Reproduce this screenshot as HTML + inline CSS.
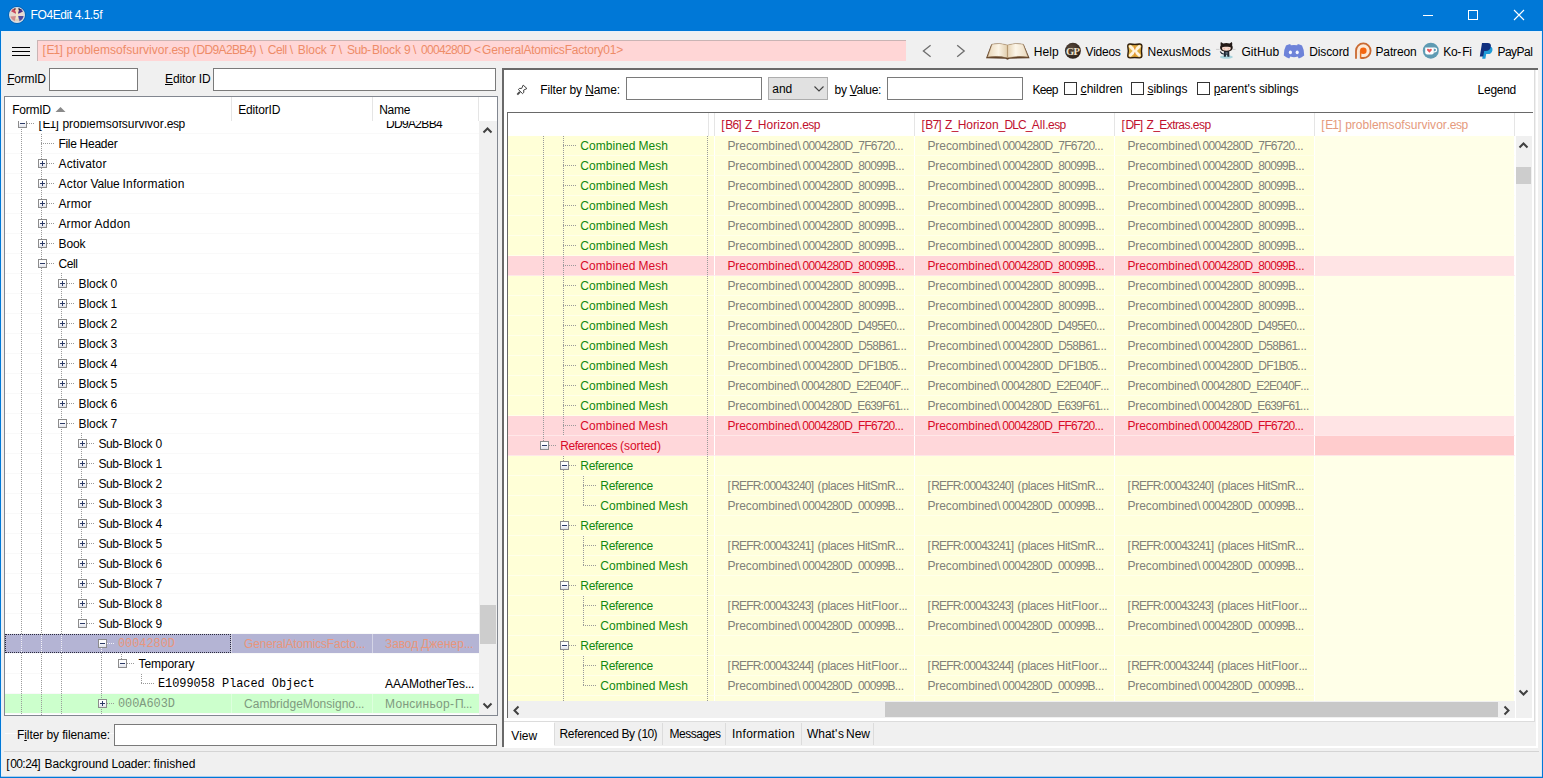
<!DOCTYPE html><html><head><meta charset="utf-8"><title>FO4Edit 4.1.5f</title><style>
*{margin:0;padding:0;box-sizing:border-box}
html,body{width:1543px;height:778px;overflow:hidden;background:#f0f0f0}
body{position:relative;font-family:"Liberation Sans",sans-serif;font-size:12px;color:#000}
div,svg,span{position:absolute}
span.u{position:static;text-decoration:underline}
span.r{position:static}
.t{white-space:nowrap;height:20px}
.m{font-family:"Liberation Mono",monospace}
.inp{background:#fff;border:1px solid #7a7a7a}
.vd{width:1px;background-image:linear-gradient(to bottom,#9a9a9a 50%,transparent 50%);background-size:1px 2px}
.hd{height:1px;background-image:linear-gradient(to right,#9a9a9a 50%,transparent 50%);background-size:2px 1px}
.vd.w{background-image:linear-gradient(to bottom,#f4f4fa 50%,#b4b4d4 50%)}
.hd.w{background-image:linear-gradient(to right,#f4f4fa 50%,#b4b4d4 50%)}
.bx{width:9px;height:9px;border:1px solid #8c8c8c;background:linear-gradient(180deg,#fff 0%,#fbfbfd 45%,#dfe1ea 100%)}
.bx:before{content:"";position:absolute;left:1px;top:3px;width:5px;height:1px;background:#2b3a66}
.bx.p:after{content:"";position:absolute;left:3px;top:1px;width:1px;height:5px;background:#2b3a66}
.cb{width:13px;height:13px;border:1px solid #333;background:#fff}
</style></head><body>
<div style="left:0px;top:0px;width:1543px;height:31px;background:#0078d7;"></div>
<div style="left:0px;top:31px;width:1px;height:747px;background:#0078d7;"></div>
<div style="left:1542px;top:31px;width:1px;height:747px;background:#0078d7;"></div>
<div style="left:1541px;top:31px;width:1px;height:745px;background:#dbe9f7;"></div>
<div style="left:1px;top:31px;width:1px;height:745px;background:#e6f0fa;"></div>
<div style="left:1px;top:31px;width:1541px;height:1px;background:#e6f1fb;"></div>
<div style="left:0px;top:777px;width:1543px;height:1px;background:#0078d7;"></div>
<div style="left:1px;top:776px;width:1541px;height:1px;background:#a8cdee;"></div>
<svg style="left:7px;top:5px" width="20" height="20" viewBox="0 0 20 20">
<circle cx="10" cy="10" r="8.4" fill="none" stroke="#0a4a8c" stroke-width="1" opacity=".55"/>
<circle cx="10" cy="10" r="7.4" fill="#e8d9cf" stroke="#d6dbe0" stroke-width="1.2"/>
<path d="M4 6.2 A7 7 0 0 1 8.6 3.2 L9.2 9 Z" fill="#c94a5c"/>
<path d="M6.2 4 L8.4 3.3 L8.6 5 Z" fill="#3a2a20"/>
<path d="M11.4 3.2 A7 7 0 0 1 16 6.4 L10.8 9 Z" fill="#4a2f86"/>
<path d="M11.6 3.3 L14 4.2 L11.8 5.2 Z" fill="#2e241c"/>
<path d="M3.4 11.4 A7 7 0 0 0 7.6 16.2 L9 11 Z" fill="#cf7f80" opacity=".85"/>
<path d="M16.6 11 A7 7 0 0 1 12.4 16.2 L11 11 Z" fill="#3d3a9a" opacity=".9"/>
<rect x="8.9" y="5" width="2.3" height="10" rx="1" fill="#f3e6c8"/>
<circle cx="10" cy="5.6" r="1.8" fill="#f0dcc0"/>
<path d="M8 15 h4.4" stroke="#d9ccb0" stroke-width="1.2"/>
</svg>
<div class="t" style="left:30.60px;top:5.30px;line-height:20px;font-size:12.0px;color:#fff;"><span class="r" style="letter-spacing:-0.43px">FO4Edit</span><span class="r" style="letter-spacing:-0.33px"> </span><span class="r" style="letter-spacing:-0.67px">4</span><span class="r" style="letter-spacing:-0.33px">.</span><span class="r" style="letter-spacing:-0.67px">1</span><span class="r" style="letter-spacing:-0.33px">.</span><span class="r" style="letter-spacing:-0.00px">5f</span></div>
<svg style="left:1415px;top:0" width="120" height="31" viewBox="0 0 120 31" fill="none" stroke="#fff" stroke-width="1" shape-rendering="crispEdges">
<path d="M8 15.5 H18"/>
<rect x="53.5" y="10.5" width="9" height="9"/>
</svg>
<svg style="left:1508px;top:4px" width="22" height="22" viewBox="0 0 22 22" fill="none" stroke="#fff" stroke-width="1.1">
<path d="M6 6 L16 16 M16 6 L6 16"/>
</svg>
<div style="left:12px;top:47px;width:18px;height:1px;background:#000;"></div>
<div style="left:12px;top:51px;width:18px;height:1px;background:#000;"></div>
<div style="left:12px;top:55px;width:18px;height:1px;background:#000;"></div>
<div style="left:37px;top:40px;width:869px;height:21px;background:#ffd6d6;border-top:1px solid #c9b4b4;border-left:1px solid #c9b4b4;"></div>
<div class="t" style="left:42.40px;top:40.00px;line-height:20px;font-size:12.0px;color:#ee8c68;"><span class="r" style="letter-spacing:0.67px">[</span><span class="r" style="letter-spacing:-0.85px">E1</span><span class="r" style="letter-spacing:0.67px">]</span><span class="r" style="letter-spacing:-0.33px"> </span><span class="r" style="letter-spacing:0.04px">problemsofsurvivor</span><span class="r" style="letter-spacing:-0.33px">.</span><span class="r" style="letter-spacing:-0.44px">esp</span><span class="r" style="letter-spacing:-0.33px"> </span><span class="r" style="letter-spacing:0.01px">(</span><span class="r" style="letter-spacing:-0.67px">DD9A2BB4</span><span class="r" style="letter-spacing:0.01px">)</span><span class="r" style="letter-spacing:-0.33px"> </span><span class="r" style="letter-spacing:1.67px">\</span><span class="r" style="letter-spacing:-0.33px"> </span><span class="r" style="letter-spacing:-0.41px">Cell</span><span class="r" style="letter-spacing:-0.33px"> </span><span class="r" style="letter-spacing:1.67px">\</span><span class="r" style="letter-spacing:-0.33px"> </span><span class="r" style="letter-spacing:-0.06px">Block</span><span class="r" style="letter-spacing:-0.33px"> </span><span class="r" style="letter-spacing:-0.67px">7</span><span class="r" style="letter-spacing:-0.33px"> </span><span class="r" style="letter-spacing:1.67px">\</span><span class="r" style="letter-spacing:-0.33px"> </span><span class="r" style="letter-spacing:-0.45px">Sub</span><span class="r" style="letter-spacing:1.01px">-</span><span class="r" style="letter-spacing:-0.06px">Block</span><span class="r" style="letter-spacing:-0.33px"> </span><span class="r" style="letter-spacing:-0.67px">9</span><span class="r" style="letter-spacing:-0.33px"> </span><span class="r" style="letter-spacing:1.67px">\</span><span class="r" style="letter-spacing:-0.33px"> </span><span class="r" style="letter-spacing:-0.67px">0004280D</span><span class="r" style="letter-spacing:-0.33px"> </span><span class="r" style="letter-spacing:1.00px">&lt;</span><span class="r" style="letter-spacing:-0.20px">GeneralAtomicsFactory01</span><span class="r" style="letter-spacing:1.00px">&gt;</span></div>
<svg style="left:918px;top:42px" width="52" height="18" viewBox="0 0 52 18" fill="none" stroke="#6e6e6e" stroke-width="1.3">
<path d="M12.6 3.3 L5.4 9 L12.6 14.7"/><path d="M39.2 3.3 L46.2 9 L39.2 14.7"/></svg>

<!-- book -->
<svg style="left:985px;top:42.4px" width="46" height="18.4" viewBox="0 0 46 20" preserveAspectRatio="none">
<defs>
<linearGradient id="pgL" x1="0" y1="0" x2="1" y2="0"><stop offset="0" stop-color="#e9d6b8"/><stop offset=".55" stop-color="#fbf4e6"/><stop offset="1" stop-color="#e2cfae"/></linearGradient>
<linearGradient id="pgR" x1="0" y1="0" x2="1" y2="0"><stop offset="0" stop-color="#e6d3b3"/><stop offset=".4" stop-color="#fcf6ea"/><stop offset="1" stop-color="#ead9bd"/></linearGradient>
</defs>
<path d="M1 17.6 L6.2 2.6 Q14 0.6 22.5 3.4 Q31 0.6 38.8 2.6 L44.6 17.6 L24.5 18.2 L22.5 19.2 L20.5 18.2 Z" fill="#5f4127"/>
<path d="M2.6 16.3 L7 2.4 Q14.5 0.4 22.4 3.2 L22.4 17.2 Q13 14.6 2.6 16.3 Z" fill="url(#pgL)" stroke="#9c7d58" stroke-width=".5"/>
<path d="M43 16.3 L38.2 2.4 Q30.5 0.4 22.6 3.2 L22.6 17.2 Q32 14.6 43 16.3 Z" fill="url(#pgR)" stroke="#9c7d58" stroke-width=".5"/>
<path d="M22.5 3.3 V17.4" stroke="#b79a72" stroke-width=".8"/>
</svg>
<!-- GP -->
<svg style="left:1064px;top:42px" width="18" height="18" viewBox="0 0 18 18">
<defs><radialGradient id="gp" cx=".4" cy=".35" r=".8"><stop offset="0" stop-color="#5a4a3c"/><stop offset="1" stop-color="#231a14"/></radialGradient></defs>
<circle cx="8.9" cy="8.8" r="8" fill="url(#gp)"/>
<text x="8.6" y="12.5" text-anchor="middle" font-family="Liberation Serif, serif" font-weight="bold" font-size="10.5" fill="#f0e6d0" letter-spacing="-0.7">GP</text>
</svg>
<!-- nexus -->
<svg style="left:1126px;top:42px" width="18" height="18" viewBox="0 0 18 18">
<defs><linearGradient id="nx" x1="0" y1="0" x2="1" y2="1"><stop offset="0" stop-color="#e9c25a"/><stop offset="1" stop-color="#d6a030"/></linearGradient></defs>
<path d="M4.2 2 Q8.8 3 13.4 2 Q16 1.8 15.9 4.4 Q15 8.9 15.9 13.4 Q16 16 13.4 15.9 Q8.8 15 4.2 15.9 Q1.6 16 1.8 13.4 Q2.8 8.9 1.8 4.4 Q1.6 1.8 4.2 2 Z" fill="url(#nx)" stroke="#2e1c0c" stroke-width="1.4"/>
<path d="M4.4 4.6 L13.2 13.2 M13.2 4.6 L4.4 13.2" stroke="#fff3df" stroke-width="3" stroke-linecap="round"/>
<path d="M8.8 3.4 V7.4 M8.8 10.4 V14.4" stroke="#e8922e" stroke-width="1.3"/>
</svg>
<!-- github octocat -->
<svg style="left:1215px;top:41px" width="23" height="19" viewBox="0 0 23 19">
<ellipse cx="11.4" cy="16" rx="6.4" ry="1.8" fill="#a9d5de"/>
<path d="M1 8.4 H4.6 M18 8.4 H20.5" stroke="#b4b4b4" stroke-width=".6"/>
<path d="M9 9.6 H14.2 L14.4 15.8 H12.4 L12.1 13.8 H11.1 L10.8 15.8 H8.8 Z" fill="#1f2a36"/>
<path d="M10.6 11 H12.6 V13.4 H10.6 Z" fill="#5d6b78"/>
<path d="M9 13 Q6.4 13.2 5.2 10.6" stroke="#1f2a36" stroke-width="1.1" fill="none"/>
<path d="M5.9 1 L8.2 2.5 Q11.4 1.7 14.6 2.5 L16.9 1 Q17.6 3 17.1 4.3 Q18.2 6 17.5 8 Q16 10.6 11.4 10.6 Q6.8 10.6 5.3 8 Q4.6 6 5.7 4.3 Q5.2 3 5.9 1 Z" fill="#231a17"/>
<path d="M7 6.6 Q6.6 9.8 11.4 9.8 Q16.2 9.8 15.8 6.6 Q14.6 5.4 11.4 5.8 Q8.2 5.4 7 6.6 Z" fill="#f6d9cd"/>
<ellipse cx="9.3" cy="7.7" rx=".9" ry=".7" fill="#e9b8a6"/><ellipse cx="13.5" cy="7.7" rx=".9" ry=".7" fill="#e9b8a6"/>
</svg>
<!-- discord -->
<svg style="left:1283px;top:43px" width="22" height="17" viewBox="0 0 22 17">
<path d="M7.2 1 Q4.6 1.5 3 2.6 Q0.6 7 0.8 12.6 Q3.2 14.8 6.2 15.6 L7.4 13.6 Q9.2 14.2 11 14.2 Q12.8 14.2 14.6 13.6 L15.8 15.6 Q18.8 14.8 21.2 12.6 Q21.4 7 19 2.6 Q17.4 1.5 14.8 1 L14.2 2.3 Q11 1.8 7.8 2.3 Z" fill="#6e83d9"/>
<ellipse cx="7.4" cy="9.4" rx="1.6" ry="1.8" fill="#f4f6ff"/><ellipse cx="14.2" cy="9.4" rx="1.6" ry="1.8" fill="#f4f6ff"/>
</svg>
<!-- patreon -->
<svg style="left:1354px;top:42px" width="18" height="18" viewBox="0 0 18 18">
<path d="M2 16.7 V8.7 A7.3 7.3 0 1 1 9.3 16 H6.4 V8.7" fill="#fde9d6" stroke="none"/>
<path d="M2 16.7 V8.7 A7.3 7.3 0 1 1 9.3 16 H7" fill="none" stroke="#c96a32" stroke-width="1.8"/>
<circle cx="9.3" cy="8.7" r="3.3" fill="#f4650f"/>
<path d="M6.6 8.7 V16.7" stroke="#e8701e" stroke-width="1.5"/>
</svg>
<!-- ko-fi -->
<svg style="left:1422px;top:42px" width="18" height="18" viewBox="0 0 18 18">
<circle cx="8.8" cy="8.7" r="8" fill="#5f9bb3"/>
<path d="M3.2 5.4 H11.8 V10.4 Q11.8 12.4 9.8 12.4 H5.2 Q3.2 12.4 3.2 10.4 Z" fill="#fff"/>
<path d="M11.6 6.2 H12.8 Q14.6 6.2 14.6 8 Q14.6 9.8 12.8 9.8 H11.6" fill="none" stroke="#fff" stroke-width="1.3"/>
<path d="M7.4 10.8 L5.2 8.6 Q4.4 7.4 5.6 6.8 Q6.6 6.5 7.4 7.5 Q8.2 6.5 9.2 6.8 Q10.4 7.4 9.6 8.6 Z" fill="#e8555a"/>
</svg>
<!-- paypal -->
<svg style="left:1479px;top:42px" width="15" height="18" viewBox="0 0 15 18">
<path d="M5.2 4.6 H10.4 Q14 4.8 13.4 8.4 Q12.6 12 8.8 12 H7.2 L6.4 16.8 H3.2 Z" fill="#1e9bd7"/>
<path d="M3 1 H8.6 Q12.6 1.2 11.8 5 Q10.8 9 6.8 9 H5.2 L4.2 14.4 H0.8 Z" fill="#10307f"/>
</svg>

<div class="t" style="left:1033.70px;top:42.40px;line-height:20px;font-size:12.0px;"><span class="r" style="letter-spacing:0.08px">Help</span></div>
<div class="t" style="left:1085.60px;top:42.40px;line-height:20px;font-size:12.0px;"><span class="r" style="letter-spacing:-0.25px">Videos</span></div>
<div class="t" style="left:1147.60px;top:42.40px;line-height:20px;font-size:12.0px;"><span class="r" style="letter-spacing:-0.04px">NexusMods</span></div>
<div class="t" style="left:1241.40px;top:42.40px;line-height:20px;font-size:12.0px;"><span class="r" style="letter-spacing:0.11px">GitHub</span></div>
<div class="t" style="left:1309.20px;top:42.40px;line-height:20px;font-size:12.0px;"><span class="r" style="letter-spacing:-0.10px">Discord</span></div>
<div class="t" style="left:1375.50px;top:42.40px;line-height:20px;font-size:12.0px;"><span class="r" style="letter-spacing:-0.15px">Patreon</span></div>
<div class="t" style="left:1443.30px;top:42.40px;line-height:20px;font-size:12.0px;"><span class="r" style="letter-spacing:-0.34px">Ko</span><span class="r" style="letter-spacing:1.00px">-</span><span class="r" style="letter-spacing:-0.50px">Fi</span></div>
<div class="t" style="left:1497.40px;top:42.40px;line-height:20px;font-size:12.0px;"><span class="r" style="letter-spacing:-0.50px">PayPal</span></div>
<div class="t" style="left:7.20px;top:68.00px;line-height:22px;font-size:12.0px;letter-spacing:-0.249px;"><span class="u">F</span>ormID</div>
<div class="inp" style="left:49px;top:68px;width:89px;height:23px;"></div>
<div class="t" style="left:165.00px;top:68.00px;line-height:22px;font-size:12.0px;letter-spacing:-0.131px;"><span class="u">E</span>ditor ID</div>
<div class="inp" style="left:213px;top:68px;width:283px;height:23px;"></div>
<div style="left:4px;top:96px;width:494px;height:620px;background:#fff;border:1px solid #828790;"></div>
<div style="left:5px;top:634px;width:226px;height:19px;background:#b4b4d4;border:1px dotted #2a2a3c;"></div>
<div style="left:231px;top:634px;width:1px;height:19px;background:#d4d4e6;"></div>
<div style="left:232px;top:634px;width:140px;height:19px;background:#b4b4d4;"></div>
<div style="left:372px;top:634px;width:1px;height:19px;background:#d4d4e6;"></div>
<div style="left:373px;top:634px;width:106px;height:19px;background:#b4b4d4;"></div>
<div style="left:5px;top:694px;width:474px;height:19px;background:#ccffcc;"></div>
<div style="left:231px;top:694px;width:1px;height:19px;background:#ddffdd;"></div>
<div style="left:372px;top:694px;width:1px;height:19px;background:#ddffdd;"></div>
<div style="left:5px;top:133px;width:474px;height:1px;background:#f9f9f9;"></div>
<div style="left:5px;top:153px;width:474px;height:1px;background:#f9f9f9;"></div>
<div style="left:5px;top:173px;width:474px;height:1px;background:#f9f9f9;"></div>
<div style="left:5px;top:193px;width:474px;height:1px;background:#f9f9f9;"></div>
<div style="left:5px;top:213px;width:474px;height:1px;background:#f9f9f9;"></div>
<div style="left:5px;top:233px;width:474px;height:1px;background:#f9f9f9;"></div>
<div style="left:5px;top:253px;width:474px;height:1px;background:#f9f9f9;"></div>
<div style="left:5px;top:273px;width:474px;height:1px;background:#f9f9f9;"></div>
<div style="left:5px;top:293px;width:474px;height:1px;background:#f9f9f9;"></div>
<div style="left:5px;top:313px;width:474px;height:1px;background:#f9f9f9;"></div>
<div style="left:5px;top:333px;width:474px;height:1px;background:#f9f9f9;"></div>
<div style="left:5px;top:353px;width:474px;height:1px;background:#f9f9f9;"></div>
<div style="left:5px;top:373px;width:474px;height:1px;background:#f9f9f9;"></div>
<div style="left:5px;top:393px;width:474px;height:1px;background:#f9f9f9;"></div>
<div style="left:5px;top:413px;width:474px;height:1px;background:#f9f9f9;"></div>
<div style="left:5px;top:433px;width:474px;height:1px;background:#f9f9f9;"></div>
<div style="left:5px;top:453px;width:474px;height:1px;background:#f9f9f9;"></div>
<div style="left:5px;top:473px;width:474px;height:1px;background:#f9f9f9;"></div>
<div style="left:5px;top:493px;width:474px;height:1px;background:#f9f9f9;"></div>
<div style="left:5px;top:513px;width:474px;height:1px;background:#f9f9f9;"></div>
<div style="left:5px;top:533px;width:474px;height:1px;background:#f9f9f9;"></div>
<div style="left:5px;top:553px;width:474px;height:1px;background:#f9f9f9;"></div>
<div style="left:5px;top:573px;width:474px;height:1px;background:#f9f9f9;"></div>
<div style="left:5px;top:593px;width:474px;height:1px;background:#f9f9f9;"></div>
<div style="left:5px;top:613px;width:474px;height:1px;background:#f9f9f9;"></div>
<div style="left:5px;top:633px;width:474px;height:1px;background:#f9f9f9;"></div>
<div style="left:5px;top:653px;width:474px;height:1px;background:#f9f9f9;"></div>
<div style="left:5px;top:673px;width:474px;height:1px;background:#f9f9f9;"></div>
<div style="left:5px;top:693px;width:474px;height:1px;background:#f9f9f9;"></div>
<div style="left:5px;top:713px;width:474px;height:1px;background:#f9f9f9;"></div>
<div style="left:5px;top:733px;width:474px;height:1px;background:#f9f9f9;"></div>
<div class="vd" style="left:21px;top:121px;height:594px"></div>
<div class="vd" style="left:41px;top:134px;height:581px"></div>
<div class="vd" style="left:61px;top:273px;height:442px"></div>
<div class="vd" style="left:81px;top:433px;height:190px"></div>
<div class="vd" style="left:101px;top:653px;height:62px"></div>
<div class="vd" style="left:121px;top:654px;height:9px"></div>
<div class="vd" style="left:141px;top:674px;height:10px"></div>
<div class="hd" style="left:27px;top:123px;width:7px"></div>
<div class="bx" style="left:18px;top:119px"></div>
<div class="t" style="left:38.50px;top:114.00px;line-height:20px;font-size:12.0px;"><span class="r" style="letter-spacing:0.63px">[</span><span class="r" style="letter-spacing:-0.85px">E1</span><span class="r" style="letter-spacing:0.63px">]</span><span class="r" style="letter-spacing:-0.37px"> </span><span class="r" style="letter-spacing:-0.00px">problemsofsurvivor</span><span class="r" style="letter-spacing:-0.37px">.</span><span class="r" style="letter-spacing:-0.49px">esp</span></div>
<div class="hd" style="left:41px;top:143px;width:13px"></div>
<div class="t" style="left:58.50px;top:134.00px;line-height:20px;font-size:12.0px;"><span class="r" style="letter-spacing:-0.33px">File</span><span class="r" style="letter-spacing:-0.33px"> </span><span class="r" style="letter-spacing:-0.23px">Header</span></div>
<div class="hd" style="left:47px;top:163px;width:7px"></div>
<div class="bx p" style="left:38px;top:159px"></div>
<div class="t" style="left:58.50px;top:154.00px;line-height:20px;font-size:12.0px;"><span class="r" style="letter-spacing:0.15px">Activator</span></div>
<div class="hd" style="left:47px;top:183px;width:7px"></div>
<div class="bx p" style="left:38px;top:179px"></div>
<div class="t" style="left:58.50px;top:174.00px;line-height:20px;font-size:12.0px;"><span class="r" style="letter-spacing:0.20px">Actor</span><span class="r" style="letter-spacing:-0.33px"> </span><span class="r" style="letter-spacing:-0.16px">Value</span><span class="r" style="letter-spacing:-0.33px"> </span><span class="r" style="letter-spacing:0.18px">Information</span></div>
<div class="hd" style="left:47px;top:203px;width:7px"></div>
<div class="bx p" style="left:38px;top:199px"></div>
<div class="t" style="left:58.50px;top:194.00px;line-height:20px;font-size:12.0px;"><span class="r" style="letter-spacing:0.07px">Armor</span></div>
<div class="hd" style="left:47px;top:223px;width:7px"></div>
<div class="bx p" style="left:38px;top:219px"></div>
<div class="t" style="left:58.50px;top:214.00px;line-height:20px;font-size:12.0px;"><span class="r" style="letter-spacing:0.07px">Armor</span><span class="r" style="letter-spacing:-0.33px"> </span><span class="r" style="letter-spacing:0.26px">Addon</span></div>
<div class="hd" style="left:47px;top:243px;width:7px"></div>
<div class="bx p" style="left:38px;top:239px"></div>
<div class="t" style="left:58.50px;top:234.00px;line-height:20px;font-size:12.0px;"><span class="r" style="letter-spacing:-0.09px">Book</span></div>
<div class="hd" style="left:47px;top:263px;width:7px"></div>
<div class="bx" style="left:38px;top:259px"></div>
<div class="t" style="left:58.50px;top:254.00px;line-height:20px;font-size:12.0px;"><span class="r" style="letter-spacing:-0.42px">Cell</span></div>
<div class="hd" style="left:67px;top:283px;width:7px"></div>
<div class="bx p" style="left:58px;top:279px"></div>
<div class="t" style="left:78.50px;top:274.00px;line-height:20px;font-size:12.0px;"><span class="r" style="letter-spacing:-0.07px">Block</span><span class="r" style="letter-spacing:-0.33px"> </span><span class="r" style="letter-spacing:-0.67px">0</span></div>
<div class="hd" style="left:67px;top:303px;width:7px"></div>
<div class="bx p" style="left:58px;top:299px"></div>
<div class="t" style="left:78.50px;top:294.00px;line-height:20px;font-size:12.0px;"><span class="r" style="letter-spacing:-0.07px">Block</span><span class="r" style="letter-spacing:-0.33px"> </span><span class="r" style="letter-spacing:-0.67px">1</span></div>
<div class="hd" style="left:67px;top:323px;width:7px"></div>
<div class="bx p" style="left:58px;top:319px"></div>
<div class="t" style="left:78.50px;top:314.00px;line-height:20px;font-size:12.0px;"><span class="r" style="letter-spacing:-0.07px">Block</span><span class="r" style="letter-spacing:-0.33px"> </span><span class="r" style="letter-spacing:-0.67px">2</span></div>
<div class="hd" style="left:67px;top:343px;width:7px"></div>
<div class="bx p" style="left:58px;top:339px"></div>
<div class="t" style="left:78.50px;top:334.00px;line-height:20px;font-size:12.0px;"><span class="r" style="letter-spacing:-0.07px">Block</span><span class="r" style="letter-spacing:-0.33px"> </span><span class="r" style="letter-spacing:-0.67px">3</span></div>
<div class="hd" style="left:67px;top:363px;width:7px"></div>
<div class="bx p" style="left:58px;top:359px"></div>
<div class="t" style="left:78.50px;top:354.00px;line-height:20px;font-size:12.0px;"><span class="r" style="letter-spacing:-0.07px">Block</span><span class="r" style="letter-spacing:-0.33px"> </span><span class="r" style="letter-spacing:-0.67px">4</span></div>
<div class="hd" style="left:67px;top:383px;width:7px"></div>
<div class="bx p" style="left:58px;top:379px"></div>
<div class="t" style="left:78.50px;top:374.00px;line-height:20px;font-size:12.0px;"><span class="r" style="letter-spacing:-0.07px">Block</span><span class="r" style="letter-spacing:-0.33px"> </span><span class="r" style="letter-spacing:-0.67px">5</span></div>
<div class="hd" style="left:67px;top:403px;width:7px"></div>
<div class="bx p" style="left:58px;top:399px"></div>
<div class="t" style="left:78.50px;top:394.00px;line-height:20px;font-size:12.0px;"><span class="r" style="letter-spacing:-0.07px">Block</span><span class="r" style="letter-spacing:-0.33px"> </span><span class="r" style="letter-spacing:-0.67px">6</span></div>
<div class="hd" style="left:67px;top:423px;width:7px"></div>
<div class="bx" style="left:58px;top:419px"></div>
<div class="t" style="left:78.50px;top:414.00px;line-height:20px;font-size:12.0px;"><span class="r" style="letter-spacing:-0.07px">Block</span><span class="r" style="letter-spacing:-0.33px"> </span><span class="r" style="letter-spacing:-0.67px">7</span></div>
<div class="hd" style="left:87px;top:443px;width:7px"></div>
<div class="bx p" style="left:78px;top:439px"></div>
<div class="t" style="left:98.50px;top:434.00px;line-height:20px;font-size:12.0px;"><span class="r" style="letter-spacing:-0.45px">Sub</span><span class="r" style="letter-spacing:1.00px">-</span><span class="r" style="letter-spacing:-0.07px">Block</span><span class="r" style="letter-spacing:-0.33px"> </span><span class="r" style="letter-spacing:-0.67px">0</span></div>
<div class="hd" style="left:87px;top:463px;width:7px"></div>
<div class="bx p" style="left:78px;top:459px"></div>
<div class="t" style="left:98.50px;top:454.00px;line-height:20px;font-size:12.0px;"><span class="r" style="letter-spacing:-0.45px">Sub</span><span class="r" style="letter-spacing:1.00px">-</span><span class="r" style="letter-spacing:-0.07px">Block</span><span class="r" style="letter-spacing:-0.33px"> </span><span class="r" style="letter-spacing:-0.67px">1</span></div>
<div class="hd" style="left:87px;top:483px;width:7px"></div>
<div class="bx p" style="left:78px;top:479px"></div>
<div class="t" style="left:98.50px;top:474.00px;line-height:20px;font-size:12.0px;"><span class="r" style="letter-spacing:-0.45px">Sub</span><span class="r" style="letter-spacing:1.00px">-</span><span class="r" style="letter-spacing:-0.07px">Block</span><span class="r" style="letter-spacing:-0.33px"> </span><span class="r" style="letter-spacing:-0.67px">2</span></div>
<div class="hd" style="left:87px;top:503px;width:7px"></div>
<div class="bx p" style="left:78px;top:499px"></div>
<div class="t" style="left:98.50px;top:494.00px;line-height:20px;font-size:12.0px;"><span class="r" style="letter-spacing:-0.45px">Sub</span><span class="r" style="letter-spacing:1.00px">-</span><span class="r" style="letter-spacing:-0.07px">Block</span><span class="r" style="letter-spacing:-0.33px"> </span><span class="r" style="letter-spacing:-0.67px">3</span></div>
<div class="hd" style="left:87px;top:523px;width:7px"></div>
<div class="bx p" style="left:78px;top:519px"></div>
<div class="t" style="left:98.50px;top:514.00px;line-height:20px;font-size:12.0px;"><span class="r" style="letter-spacing:-0.45px">Sub</span><span class="r" style="letter-spacing:1.00px">-</span><span class="r" style="letter-spacing:-0.07px">Block</span><span class="r" style="letter-spacing:-0.33px"> </span><span class="r" style="letter-spacing:-0.67px">4</span></div>
<div class="hd" style="left:87px;top:543px;width:7px"></div>
<div class="bx p" style="left:78px;top:539px"></div>
<div class="t" style="left:98.50px;top:534.00px;line-height:20px;font-size:12.0px;"><span class="r" style="letter-spacing:-0.45px">Sub</span><span class="r" style="letter-spacing:1.00px">-</span><span class="r" style="letter-spacing:-0.07px">Block</span><span class="r" style="letter-spacing:-0.33px"> </span><span class="r" style="letter-spacing:-0.67px">5</span></div>
<div class="hd" style="left:87px;top:563px;width:7px"></div>
<div class="bx p" style="left:78px;top:559px"></div>
<div class="t" style="left:98.50px;top:554.00px;line-height:20px;font-size:12.0px;"><span class="r" style="letter-spacing:-0.45px">Sub</span><span class="r" style="letter-spacing:1.00px">-</span><span class="r" style="letter-spacing:-0.07px">Block</span><span class="r" style="letter-spacing:-0.33px"> </span><span class="r" style="letter-spacing:-0.67px">6</span></div>
<div class="hd" style="left:87px;top:583px;width:7px"></div>
<div class="bx p" style="left:78px;top:579px"></div>
<div class="t" style="left:98.50px;top:574.00px;line-height:20px;font-size:12.0px;"><span class="r" style="letter-spacing:-0.45px">Sub</span><span class="r" style="letter-spacing:1.00px">-</span><span class="r" style="letter-spacing:-0.07px">Block</span><span class="r" style="letter-spacing:-0.33px"> </span><span class="r" style="letter-spacing:-0.67px">7</span></div>
<div class="hd" style="left:87px;top:603px;width:7px"></div>
<div class="bx p" style="left:78px;top:599px"></div>
<div class="t" style="left:98.50px;top:594.00px;line-height:20px;font-size:12.0px;"><span class="r" style="letter-spacing:-0.45px">Sub</span><span class="r" style="letter-spacing:1.00px">-</span><span class="r" style="letter-spacing:-0.07px">Block</span><span class="r" style="letter-spacing:-0.33px"> </span><span class="r" style="letter-spacing:-0.67px">8</span></div>
<div class="hd" style="left:87px;top:623px;width:7px"></div>
<div class="bx" style="left:78px;top:619px"></div>
<div class="t" style="left:98.50px;top:614.00px;line-height:20px;font-size:12.0px;"><span class="r" style="letter-spacing:-0.45px">Sub</span><span class="r" style="letter-spacing:1.00px">-</span><span class="r" style="letter-spacing:-0.07px">Block</span><span class="r" style="letter-spacing:-0.33px"> </span><span class="r" style="letter-spacing:-0.67px">9</span></div>
<div class="hd" style="left:107px;top:643px;width:7px"></div>
<div class="bx" style="left:98px;top:639px"></div>
<div class="t m" style="left:118.00px;top:633.80px;line-height:20px;font-size:11.9px;letter-spacing:-0.022px;color:#e8967c;">0004280D</div>
<div class="hd" style="left:127px;top:663px;width:7px"></div>
<div class="bx" style="left:118px;top:659px"></div>
<div class="t" style="left:138.50px;top:654.00px;line-height:20px;font-size:12.0px;"><span class="r" style="letter-spacing:-0.08px">Temporary</span></div>
<div class="hd" style="left:141px;top:683px;width:13px"></div>
<div class="t m" style="left:158.00px;top:673.80px;line-height:20px;font-size:11.9px;letter-spacing:-0.022px;">E1099058 Placed Object</div>
<div class="hd" style="left:107px;top:703px;width:7px"></div>
<div class="bx p" style="left:98px;top:699px"></div>
<div class="t m" style="left:118.00px;top:693.80px;line-height:20px;font-size:11.9px;letter-spacing:-0.022px;color:#7f9a7f;">000A603D</div>
<div class="vd w" style="left:21px;top:635px;height:17px"></div>
<div class="vd w" style="left:41px;top:635px;height:17px"></div>
<div class="vd w" style="left:61px;top:635px;height:17px"></div>
<div class="vd w" style="left:101px;top:648px;height:4px"></div>
<div class="hd w" style="left:107px;top:643px;width:7px"></div>
<div class="t" style="left:386.00px;top:114.00px;line-height:20px;font-size:12.0px;"><span class="r" style="letter-spacing:-0.67px">DD9A2BB4</span></div>
<div class="t" style="left:244.00px;top:634.00px;line-height:20px;font-size:12.0px;color:#e8967c;"><span class="r" style="letter-spacing:-0.18px">GeneralAtomicsFacto</span><span class="r" style="letter-spacing:-0.33px">.</span><span class="r" style="letter-spacing:-0.33px">.</span><span class="r" style="letter-spacing:-0.33px">.</span></div>
<div class="t" style="left:385.00px;top:634.00px;line-height:20px;font-size:12.0px;color:#e8967c;"><span class="r" style="letter-spacing:-0.11px">Завод</span><span class="r" style="letter-spacing:-0.33px"> </span><span class="r" style="letter-spacing:0.03px">Дженер</span><span class="r" style="letter-spacing:-0.33px">.</span><span class="r" style="letter-spacing:-0.33px">.</span><span class="r" style="letter-spacing:-0.33px">.</span></div>
<div class="t" style="left:385.00px;top:674.00px;line-height:20px;font-size:12.0px;"><span class="r" style="letter-spacing:-0.00px">AAAMotherTes</span><span class="r" style="letter-spacing:-0.33px">.</span><span class="r" style="letter-spacing:-0.33px">.</span><span class="r" style="letter-spacing:-0.33px">.</span></div>
<div class="t" style="left:244.00px;top:694.00px;line-height:20px;font-size:12.0px;color:#7f9a7f;"><span class="r" style="letter-spacing:0.02px">CambridgeMonsigno</span><span class="r" style="letter-spacing:-0.33px">.</span><span class="r" style="letter-spacing:-0.33px">.</span><span class="r" style="letter-spacing:-0.33px">.</span></div>
<div class="t" style="left:385.00px;top:694.00px;line-height:20px;font-size:12.0px;color:#7f9a7f;"><span class="r" style="letter-spacing:0.29px">Монсиньор</span><span class="r" style="letter-spacing:1.00px">-</span><span class="r" style="letter-spacing:-0.62px">П</span><span class="r" style="letter-spacing:-0.33px">.</span><span class="r" style="letter-spacing:-0.33px">.</span><span class="r" style="letter-spacing:-0.33px">.</span></div>
<div style="left:5px;top:97px;width:492px;height:24px;background:#fff;"></div>
<div class="t" style="left:12.30px;top:98.50px;line-height:22px;font-size:12.0px;"><span class="r" style="letter-spacing:-0.28px">FormID</span></div>
<div class="t" style="left:238.20px;top:98.50px;line-height:22px;font-size:12.0px;"><span class="r" style="letter-spacing:-0.17px">EditorID</span></div>
<div class="t" style="left:379.20px;top:98.50px;line-height:22px;font-size:12.0px;"><span class="r" style="letter-spacing:-0.25px">Name</span></div>
<svg style="left:55px;top:106px" width="11" height="7" viewBox="0 0 11 7"><path d="M0.5 6 L5.5 1 L10.5 6 Z" fill="#8a8a8a"/></svg>
<div style="left:231px;top:97px;width:1px;height:24px;background:#e5e5e5;"></div>
<div style="left:372px;top:97px;width:1px;height:24px;background:#e5e5e5;"></div>
<div style="left:478px;top:97px;width:1px;height:24px;background:#e5e5e5;"></div>
<div style="left:479px;top:121px;width:18px;height:594px;background:#f0f0f0;"></div>
<div style="left:480px;top:605px;width:16px;height:39px;background:#cdcdcd;"></div>
<svg style="left:482px;top:126px" width="11" height="8" viewBox="0 0 11 8" fill="none" stroke="#404040" stroke-width="2"><path d="M1.5 6.5 L5.5 2.5 L9.5 6.5"/></svg>
<svg style="left:482px;top:702px" width="11" height="8" viewBox="0 0 11 8" fill="none" stroke="#404040" stroke-width="2"><path d="M1.5 1.5 L5.5 5.5 L9.5 1.5"/></svg>
<div class="t" style="left:17.00px;top:724.00px;line-height:22px;font-size:12.0px;letter-spacing:-0.089px;">F<span class="u">i</span>lter by filename:</div>
<div class="inp" style="left:114px;top:724px;width:383px;height:22px;"></div>
<div style="left:502px;top:68px;width:1036px;height:680px;background:#f0f0f0;"></div>
<div style="left:1536px;top:70px;width:2px;height:678px;background:#fff;"></div>
<div style="left:504px;top:746px;width:1034px;height:2px;background:#fff;"></div>
<div style="left:502px;top:68px;width:1036px;height:2px;background:#696969;"></div>
<div style="left:502px;top:68px;width:2px;height:679px;background:#696969;"></div>
<div style="left:504px;top:70px;width:1031px;height:652px;background:#fff;border-right:1px solid #dcdcdc;border-bottom:1px solid #dcdcdc;"></div>

<svg style="left:516px;top:84px" width="12" height="12" viewBox="0 0 12 12" fill="none" stroke="#3c3c3c" stroke-width="1" stroke-linejoin="round">
<path d="M7.2 1.1 L10.9 4.5 L7.6 6.2 L7.9 8.3 L6.5 9.6 L2.4 5.6 L3.4 4.4 L5.7 4.4 Z"/>
<path d="M3.9 7.9 L1.3 10.6" stroke-width="1.9" stroke="#4a4a4a"/>
</svg>

<div class="t" style="left:540.30px;top:79.50px;line-height:20px;font-size:12.0px;letter-spacing:-0.117px;">Filter by <span class="u">N</span>ame:</div>
<div class="inp" style="left:626px;top:77px;width:136px;height:23px;"></div>
<div style="left:768px;top:77px;width:60px;height:23px;background:#e1e1e1;border:1px solid #adadad;"></div>
<div class="t" style="left:772.30px;top:78.50px;line-height:20px;font-size:12.0px;"><span class="r" style="letter-spacing:-0.01px">and</span></div>
<svg style="left:813px;top:85px" width="12" height="8" viewBox="0 0 12 8" fill="none" stroke="#404040" stroke-width="1.1"><path d="M1.5 1.5 L6 6 L10.5 1.5"/></svg>
<div class="t" style="left:834.60px;top:79.50px;line-height:20px;font-size:12.0px;letter-spacing:-0.294px;">by <span class="u">V</span>alue:</div>
<div class="inp" style="left:887px;top:77px;width:136px;height:23px;"></div>
<div class="t" style="left:1032.40px;top:80.00px;line-height:20px;font-size:12.0px;"><span class="r" style="letter-spacing:-0.63px">Keep</span></div>
<div class="cb" style="left:1064px;top:82px;width:13px;height:13px;"></div>
<div class="t" style="left:1080.60px;top:79.00px;line-height:20px;font-size:12.0px;letter-spacing:0.022px;"><span class="u">c</span>hildren</div>
<div class="cb" style="left:1131px;top:82px;width:13px;height:13px;"></div>
<div class="t" style="left:1147.40px;top:79.00px;line-height:20px;font-size:12.0px;letter-spacing:0.010px;"><span class="u">s</span>iblings</div>
<div class="cb" style="left:1197px;top:82px;width:13px;height:13px;"></div>
<div class="t" style="left:1213.70px;top:79.00px;line-height:20px;font-size:12.0px;letter-spacing:-0.051px;"><span class="u">p</span>arent's siblings</div>
<div class="t" style="left:1477.60px;top:80.00px;line-height:20px;font-size:12.0px;"><span class="r" style="letter-spacing:-0.27px">Legend</span></div>
<div style="left:507px;top:112px;width:1026px;height:606px;background:#fff;border-top:1px solid #696969;border-left:1px solid #696969;"></div>
<div style="left:508px;top:136px;width:1007px;height:565px;overflow:hidden">
<div style="left:0px;top:0px;width:206px;height:19px;background:#ffffd7;"></div>
<div style="left:207px;top:0px;width:199px;height:19px;background:#ffffdc;"></div>
<div style="left:407px;top:0px;width:199px;height:19px;background:#ffffdc;"></div>
<div style="left:607px;top:0px;width:199px;height:19px;background:#ffffdc;"></div>
<div style="left:807px;top:0px;width:199px;height:19px;background:#ffffe8;"></div>
<div style="left:0px;top:19px;width:1007px;height:1px;background:#ffffea;"></div>
<div style="left:0px;top:20px;width:206px;height:19px;background:#ffffd7;"></div>
<div style="left:207px;top:20px;width:199px;height:19px;background:#ffffdc;"></div>
<div style="left:407px;top:20px;width:199px;height:19px;background:#ffffdc;"></div>
<div style="left:607px;top:20px;width:199px;height:19px;background:#ffffdc;"></div>
<div style="left:807px;top:20px;width:199px;height:19px;background:#ffffe8;"></div>
<div style="left:0px;top:39px;width:1007px;height:1px;background:#ffffea;"></div>
<div style="left:0px;top:40px;width:206px;height:19px;background:#ffffd7;"></div>
<div style="left:207px;top:40px;width:199px;height:19px;background:#ffffdc;"></div>
<div style="left:407px;top:40px;width:199px;height:19px;background:#ffffdc;"></div>
<div style="left:607px;top:40px;width:199px;height:19px;background:#ffffdc;"></div>
<div style="left:807px;top:40px;width:199px;height:19px;background:#ffffe8;"></div>
<div style="left:0px;top:59px;width:1007px;height:1px;background:#ffffea;"></div>
<div style="left:0px;top:60px;width:206px;height:19px;background:#ffffd7;"></div>
<div style="left:207px;top:60px;width:199px;height:19px;background:#ffffdc;"></div>
<div style="left:407px;top:60px;width:199px;height:19px;background:#ffffdc;"></div>
<div style="left:607px;top:60px;width:199px;height:19px;background:#ffffdc;"></div>
<div style="left:807px;top:60px;width:199px;height:19px;background:#ffffe8;"></div>
<div style="left:0px;top:79px;width:1007px;height:1px;background:#ffffea;"></div>
<div style="left:0px;top:80px;width:206px;height:19px;background:#ffffd7;"></div>
<div style="left:207px;top:80px;width:199px;height:19px;background:#ffffdc;"></div>
<div style="left:407px;top:80px;width:199px;height:19px;background:#ffffdc;"></div>
<div style="left:607px;top:80px;width:199px;height:19px;background:#ffffdc;"></div>
<div style="left:807px;top:80px;width:199px;height:19px;background:#ffffe8;"></div>
<div style="left:0px;top:99px;width:1007px;height:1px;background:#ffffea;"></div>
<div style="left:0px;top:100px;width:206px;height:19px;background:#ffffd7;"></div>
<div style="left:207px;top:100px;width:199px;height:19px;background:#ffffdc;"></div>
<div style="left:407px;top:100px;width:199px;height:19px;background:#ffffdc;"></div>
<div style="left:607px;top:100px;width:199px;height:19px;background:#ffffdc;"></div>
<div style="left:807px;top:100px;width:199px;height:19px;background:#ffffe8;"></div>
<div style="left:0px;top:119px;width:1007px;height:1px;background:#ffffea;"></div>
<div style="left:0px;top:120px;width:206px;height:19px;background:#ffd7da;"></div>
<div style="left:207px;top:120px;width:199px;height:19px;background:#ffd7da;"></div>
<div style="left:407px;top:120px;width:199px;height:19px;background:#ffd7da;"></div>
<div style="left:607px;top:120px;width:199px;height:19px;background:#ffd7da;"></div>
<div style="left:807px;top:120px;width:199px;height:19px;background:#ffe4e5;"></div>
<div style="left:0px;top:139px;width:1007px;height:1px;background:#ffe7e9;"></div>
<div style="left:0px;top:140px;width:206px;height:19px;background:#ffffd7;"></div>
<div style="left:207px;top:140px;width:199px;height:19px;background:#ffffdc;"></div>
<div style="left:407px;top:140px;width:199px;height:19px;background:#ffffdc;"></div>
<div style="left:607px;top:140px;width:199px;height:19px;background:#ffffdc;"></div>
<div style="left:807px;top:140px;width:199px;height:19px;background:#ffffe8;"></div>
<div style="left:0px;top:159px;width:1007px;height:1px;background:#ffffea;"></div>
<div style="left:0px;top:160px;width:206px;height:19px;background:#ffffd7;"></div>
<div style="left:207px;top:160px;width:199px;height:19px;background:#ffffdc;"></div>
<div style="left:407px;top:160px;width:199px;height:19px;background:#ffffdc;"></div>
<div style="left:607px;top:160px;width:199px;height:19px;background:#ffffdc;"></div>
<div style="left:807px;top:160px;width:199px;height:19px;background:#ffffe8;"></div>
<div style="left:0px;top:179px;width:1007px;height:1px;background:#ffffea;"></div>
<div style="left:0px;top:180px;width:206px;height:19px;background:#ffffd7;"></div>
<div style="left:207px;top:180px;width:199px;height:19px;background:#ffffdc;"></div>
<div style="left:407px;top:180px;width:199px;height:19px;background:#ffffdc;"></div>
<div style="left:607px;top:180px;width:199px;height:19px;background:#ffffdc;"></div>
<div style="left:807px;top:180px;width:199px;height:19px;background:#ffffe8;"></div>
<div style="left:0px;top:199px;width:1007px;height:1px;background:#ffffea;"></div>
<div style="left:0px;top:200px;width:206px;height:19px;background:#ffffd7;"></div>
<div style="left:207px;top:200px;width:199px;height:19px;background:#ffffdc;"></div>
<div style="left:407px;top:200px;width:199px;height:19px;background:#ffffdc;"></div>
<div style="left:607px;top:200px;width:199px;height:19px;background:#ffffdc;"></div>
<div style="left:807px;top:200px;width:199px;height:19px;background:#ffffe8;"></div>
<div style="left:0px;top:219px;width:1007px;height:1px;background:#ffffea;"></div>
<div style="left:0px;top:220px;width:206px;height:19px;background:#ffffd7;"></div>
<div style="left:207px;top:220px;width:199px;height:19px;background:#ffffdc;"></div>
<div style="left:407px;top:220px;width:199px;height:19px;background:#ffffdc;"></div>
<div style="left:607px;top:220px;width:199px;height:19px;background:#ffffdc;"></div>
<div style="left:807px;top:220px;width:199px;height:19px;background:#ffffe8;"></div>
<div style="left:0px;top:239px;width:1007px;height:1px;background:#ffffea;"></div>
<div style="left:0px;top:240px;width:206px;height:19px;background:#ffffd7;"></div>
<div style="left:207px;top:240px;width:199px;height:19px;background:#ffffdc;"></div>
<div style="left:407px;top:240px;width:199px;height:19px;background:#ffffdc;"></div>
<div style="left:607px;top:240px;width:199px;height:19px;background:#ffffdc;"></div>
<div style="left:807px;top:240px;width:199px;height:19px;background:#ffffe8;"></div>
<div style="left:0px;top:259px;width:1007px;height:1px;background:#ffffea;"></div>
<div style="left:0px;top:260px;width:206px;height:19px;background:#ffffd7;"></div>
<div style="left:207px;top:260px;width:199px;height:19px;background:#ffffdc;"></div>
<div style="left:407px;top:260px;width:199px;height:19px;background:#ffffdc;"></div>
<div style="left:607px;top:260px;width:199px;height:19px;background:#ffffdc;"></div>
<div style="left:807px;top:260px;width:199px;height:19px;background:#ffffe8;"></div>
<div style="left:0px;top:279px;width:1007px;height:1px;background:#ffffea;"></div>
<div style="left:0px;top:280px;width:206px;height:19px;background:#ffd7da;"></div>
<div style="left:207px;top:280px;width:199px;height:19px;background:#ffd7da;"></div>
<div style="left:407px;top:280px;width:199px;height:19px;background:#ffd7da;"></div>
<div style="left:607px;top:280px;width:199px;height:19px;background:#ffd7da;"></div>
<div style="left:807px;top:280px;width:199px;height:19px;background:#ffe4e5;"></div>
<div style="left:0px;top:299px;width:1007px;height:1px;background:#ffe7e9;"></div>
<div style="left:0px;top:300px;width:206px;height:19px;background:#ffd7da;"></div>
<div style="left:207px;top:300px;width:199px;height:19px;background:#ffd7da;"></div>
<div style="left:407px;top:300px;width:199px;height:19px;background:#ffd7da;"></div>
<div style="left:607px;top:300px;width:199px;height:19px;background:#ffd7da;"></div>
<div style="left:807px;top:300px;width:199px;height:19px;background:#ffcccd;"></div>
<div style="left:0px;top:319px;width:1007px;height:1px;background:#ffe7e9;"></div>
<div style="left:0px;top:320px;width:206px;height:19px;background:#ffffd7;"></div>
<div style="left:207px;top:320px;width:199px;height:19px;background:#ffffdc;"></div>
<div style="left:407px;top:320px;width:199px;height:19px;background:#ffffdc;"></div>
<div style="left:607px;top:320px;width:199px;height:19px;background:#ffffdc;"></div>
<div style="left:807px;top:320px;width:199px;height:19px;background:#ffffe8;"></div>
<div style="left:0px;top:339px;width:1007px;height:1px;background:#ffffea;"></div>
<div style="left:0px;top:340px;width:206px;height:19px;background:#ffffd7;"></div>
<div style="left:207px;top:340px;width:199px;height:19px;background:#ffffdc;"></div>
<div style="left:407px;top:340px;width:199px;height:19px;background:#ffffdc;"></div>
<div style="left:607px;top:340px;width:199px;height:19px;background:#ffffdc;"></div>
<div style="left:807px;top:340px;width:199px;height:19px;background:#ffffe8;"></div>
<div style="left:0px;top:359px;width:1007px;height:1px;background:#ffffea;"></div>
<div style="left:0px;top:360px;width:206px;height:19px;background:#ffffd7;"></div>
<div style="left:207px;top:360px;width:199px;height:19px;background:#ffffdc;"></div>
<div style="left:407px;top:360px;width:199px;height:19px;background:#ffffdc;"></div>
<div style="left:607px;top:360px;width:199px;height:19px;background:#ffffdc;"></div>
<div style="left:807px;top:360px;width:199px;height:19px;background:#ffffe8;"></div>
<div style="left:0px;top:379px;width:1007px;height:1px;background:#ffffea;"></div>
<div style="left:0px;top:380px;width:206px;height:19px;background:#ffffd7;"></div>
<div style="left:207px;top:380px;width:199px;height:19px;background:#ffffdc;"></div>
<div style="left:407px;top:380px;width:199px;height:19px;background:#ffffdc;"></div>
<div style="left:607px;top:380px;width:199px;height:19px;background:#ffffdc;"></div>
<div style="left:807px;top:380px;width:199px;height:19px;background:#ffffe8;"></div>
<div style="left:0px;top:399px;width:1007px;height:1px;background:#ffffea;"></div>
<div style="left:0px;top:400px;width:206px;height:19px;background:#ffffd7;"></div>
<div style="left:207px;top:400px;width:199px;height:19px;background:#ffffdc;"></div>
<div style="left:407px;top:400px;width:199px;height:19px;background:#ffffdc;"></div>
<div style="left:607px;top:400px;width:199px;height:19px;background:#ffffdc;"></div>
<div style="left:807px;top:400px;width:199px;height:19px;background:#ffffe8;"></div>
<div style="left:0px;top:419px;width:1007px;height:1px;background:#ffffea;"></div>
<div style="left:0px;top:420px;width:206px;height:19px;background:#ffffd7;"></div>
<div style="left:207px;top:420px;width:199px;height:19px;background:#ffffdc;"></div>
<div style="left:407px;top:420px;width:199px;height:19px;background:#ffffdc;"></div>
<div style="left:607px;top:420px;width:199px;height:19px;background:#ffffdc;"></div>
<div style="left:807px;top:420px;width:199px;height:19px;background:#ffffe8;"></div>
<div style="left:0px;top:439px;width:1007px;height:1px;background:#ffffea;"></div>
<div style="left:0px;top:440px;width:206px;height:19px;background:#ffffd7;"></div>
<div style="left:207px;top:440px;width:199px;height:19px;background:#ffffdc;"></div>
<div style="left:407px;top:440px;width:199px;height:19px;background:#ffffdc;"></div>
<div style="left:607px;top:440px;width:199px;height:19px;background:#ffffdc;"></div>
<div style="left:807px;top:440px;width:199px;height:19px;background:#ffffe8;"></div>
<div style="left:0px;top:459px;width:1007px;height:1px;background:#ffffea;"></div>
<div style="left:0px;top:460px;width:206px;height:19px;background:#ffffd7;"></div>
<div style="left:207px;top:460px;width:199px;height:19px;background:#ffffdc;"></div>
<div style="left:407px;top:460px;width:199px;height:19px;background:#ffffdc;"></div>
<div style="left:607px;top:460px;width:199px;height:19px;background:#ffffdc;"></div>
<div style="left:807px;top:460px;width:199px;height:19px;background:#ffffe8;"></div>
<div style="left:0px;top:479px;width:1007px;height:1px;background:#ffffea;"></div>
<div style="left:0px;top:480px;width:206px;height:19px;background:#ffffd7;"></div>
<div style="left:207px;top:480px;width:199px;height:19px;background:#ffffdc;"></div>
<div style="left:407px;top:480px;width:199px;height:19px;background:#ffffdc;"></div>
<div style="left:607px;top:480px;width:199px;height:19px;background:#ffffdc;"></div>
<div style="left:807px;top:480px;width:199px;height:19px;background:#ffffe8;"></div>
<div style="left:0px;top:499px;width:1007px;height:1px;background:#ffffea;"></div>
<div style="left:0px;top:500px;width:206px;height:19px;background:#ffffd7;"></div>
<div style="left:207px;top:500px;width:199px;height:19px;background:#ffffdc;"></div>
<div style="left:407px;top:500px;width:199px;height:19px;background:#ffffdc;"></div>
<div style="left:607px;top:500px;width:199px;height:19px;background:#ffffdc;"></div>
<div style="left:807px;top:500px;width:199px;height:19px;background:#ffffe8;"></div>
<div style="left:0px;top:519px;width:1007px;height:1px;background:#ffffea;"></div>
<div style="left:0px;top:520px;width:206px;height:19px;background:#ffffd7;"></div>
<div style="left:207px;top:520px;width:199px;height:19px;background:#ffffdc;"></div>
<div style="left:407px;top:520px;width:199px;height:19px;background:#ffffdc;"></div>
<div style="left:607px;top:520px;width:199px;height:19px;background:#ffffdc;"></div>
<div style="left:807px;top:520px;width:199px;height:19px;background:#ffffe8;"></div>
<div style="left:0px;top:539px;width:1007px;height:1px;background:#ffffea;"></div>
<div style="left:0px;top:540px;width:206px;height:19px;background:#ffffd7;"></div>
<div style="left:207px;top:540px;width:199px;height:19px;background:#ffffdc;"></div>
<div style="left:407px;top:540px;width:199px;height:19px;background:#ffffdc;"></div>
<div style="left:607px;top:540px;width:199px;height:19px;background:#ffffdc;"></div>
<div style="left:807px;top:540px;width:199px;height:19px;background:#ffffe8;"></div>
<div style="left:0px;top:559px;width:1007px;height:1px;background:#ffffea;"></div>
<div style="left:0px;top:560px;width:206px;height:19px;background:#ffffd7;"></div>
<div style="left:207px;top:560px;width:199px;height:19px;background:#ffffdc;"></div>
<div style="left:407px;top:560px;width:199px;height:19px;background:#ffffdc;"></div>
<div style="left:607px;top:560px;width:199px;height:19px;background:#ffffdc;"></div>
<div style="left:807px;top:560px;width:199px;height:19px;background:#ffffe8;"></div>
<div style="left:0px;top:579px;width:1007px;height:1px;background:#ffffea;"></div>
<div style="left:206px;top:0px;width:1px;height:565px;background:rgba(255,255,255,.38);"></div>
<div style="left:406px;top:0px;width:1px;height:565px;background:rgba(255,255,255,.38);"></div>
<div style="left:606px;top:0px;width:1px;height:565px;background:rgba(255,255,255,.38);"></div>
<div style="left:806px;top:0px;width:1px;height:565px;background:rgba(255,255,255,.38);"></div>
<div style="left:1006px;top:0px;width:1px;height:565px;background:rgba(255,255,255,.38);"></div>
</div>
<div class="vd" style="left:543px;top:136px;height:305px"></div>
<div class="vd" style="left:563px;top:136px;height:300px"></div>
<div class="vd" style="left:563px;top:456px;height:245px"></div>
<div class="vd" style="left:707px;top:136px;height:565px"></div>
<div class="vd" style="left:583px;top:476px;height:30px"></div>
<div class="vd" style="left:583px;top:536px;height:30px"></div>
<div class="vd" style="left:583px;top:596px;height:30px"></div>
<div class="vd" style="left:583px;top:656px;height:30px"></div>
<div class="hd" style="left:563px;top:145px;width:13px"></div>
<div class="t" style="left:580.30px;top:136.00px;line-height:20px;font-size:12.0px;color:#108810;"><span class="r" style="letter-spacing:0.05px">Combined</span><span class="r" style="letter-spacing:-0.20px"> </span><span class="r" style="letter-spacing:0.05px">Mesh</span></div>
<div class="t" style="left:727.40px;top:136.00px;line-height:20px;font-size:12.0px;color:#808078;"><span class="r" style="letter-spacing:-0.06px">Precombined</span><span class="r" style="letter-spacing:1.66px">\</span><span class="r" style="letter-spacing:-0.67px">0004280D</span><span class="r" style="letter-spacing:-0.85px">_</span><span class="r" style="letter-spacing:-0.78px">7F6720</span><span class="r" style="letter-spacing:-0.34px">.</span><span class="r" style="letter-spacing:-0.34px">.</span><span class="r" style="letter-spacing:-0.34px">.</span></div>
<div class="t" style="left:927.40px;top:136.00px;line-height:20px;font-size:12.0px;color:#808078;"><span class="r" style="letter-spacing:-0.06px">Precombined</span><span class="r" style="letter-spacing:1.66px">\</span><span class="r" style="letter-spacing:-0.67px">0004280D</span><span class="r" style="letter-spacing:-0.85px">_</span><span class="r" style="letter-spacing:-0.78px">7F6720</span><span class="r" style="letter-spacing:-0.34px">.</span><span class="r" style="letter-spacing:-0.34px">.</span><span class="r" style="letter-spacing:-0.34px">.</span></div>
<div class="t" style="left:1127.40px;top:136.00px;line-height:20px;font-size:12.0px;color:#808078;"><span class="r" style="letter-spacing:-0.06px">Precombined</span><span class="r" style="letter-spacing:1.66px">\</span><span class="r" style="letter-spacing:-0.67px">0004280D</span><span class="r" style="letter-spacing:-0.85px">_</span><span class="r" style="letter-spacing:-0.78px">7F6720</span><span class="r" style="letter-spacing:-0.34px">.</span><span class="r" style="letter-spacing:-0.34px">.</span><span class="r" style="letter-spacing:-0.34px">.</span></div>
<div class="hd" style="left:563px;top:165px;width:13px"></div>
<div class="t" style="left:580.30px;top:156.00px;line-height:20px;font-size:12.0px;color:#108810;"><span class="r" style="letter-spacing:0.05px">Combined</span><span class="r" style="letter-spacing:-0.20px"> </span><span class="r" style="letter-spacing:0.05px">Mesh</span></div>
<div class="t" style="left:727.40px;top:156.00px;line-height:20px;font-size:12.0px;color:#808078;"><span class="r" style="letter-spacing:-0.06px">Precombined</span><span class="r" style="letter-spacing:1.66px">\</span><span class="r" style="letter-spacing:-0.67px">0004280D</span><span class="r" style="letter-spacing:-0.85px">_</span><span class="r" style="letter-spacing:-0.73px">80099B</span><span class="r" style="letter-spacing:-0.34px">.</span><span class="r" style="letter-spacing:-0.34px">.</span><span class="r" style="letter-spacing:-0.34px">.</span></div>
<div class="t" style="left:927.40px;top:156.00px;line-height:20px;font-size:12.0px;color:#808078;"><span class="r" style="letter-spacing:-0.06px">Precombined</span><span class="r" style="letter-spacing:1.66px">\</span><span class="r" style="letter-spacing:-0.67px">0004280D</span><span class="r" style="letter-spacing:-0.85px">_</span><span class="r" style="letter-spacing:-0.73px">80099B</span><span class="r" style="letter-spacing:-0.34px">.</span><span class="r" style="letter-spacing:-0.34px">.</span><span class="r" style="letter-spacing:-0.34px">.</span></div>
<div class="t" style="left:1127.40px;top:156.00px;line-height:20px;font-size:12.0px;color:#808078;"><span class="r" style="letter-spacing:-0.06px">Precombined</span><span class="r" style="letter-spacing:1.66px">\</span><span class="r" style="letter-spacing:-0.67px">0004280D</span><span class="r" style="letter-spacing:-0.85px">_</span><span class="r" style="letter-spacing:-0.73px">80099B</span><span class="r" style="letter-spacing:-0.34px">.</span><span class="r" style="letter-spacing:-0.34px">.</span><span class="r" style="letter-spacing:-0.34px">.</span></div>
<div class="hd" style="left:563px;top:185px;width:13px"></div>
<div class="t" style="left:580.30px;top:176.00px;line-height:20px;font-size:12.0px;color:#108810;"><span class="r" style="letter-spacing:0.05px">Combined</span><span class="r" style="letter-spacing:-0.20px"> </span><span class="r" style="letter-spacing:0.05px">Mesh</span></div>
<div class="t" style="left:727.40px;top:176.00px;line-height:20px;font-size:12.0px;color:#808078;"><span class="r" style="letter-spacing:-0.06px">Precombined</span><span class="r" style="letter-spacing:1.66px">\</span><span class="r" style="letter-spacing:-0.67px">0004280D</span><span class="r" style="letter-spacing:-0.85px">_</span><span class="r" style="letter-spacing:-0.73px">80099B</span><span class="r" style="letter-spacing:-0.34px">.</span><span class="r" style="letter-spacing:-0.34px">.</span><span class="r" style="letter-spacing:-0.34px">.</span></div>
<div class="t" style="left:927.40px;top:176.00px;line-height:20px;font-size:12.0px;color:#808078;"><span class="r" style="letter-spacing:-0.06px">Precombined</span><span class="r" style="letter-spacing:1.66px">\</span><span class="r" style="letter-spacing:-0.67px">0004280D</span><span class="r" style="letter-spacing:-0.85px">_</span><span class="r" style="letter-spacing:-0.73px">80099B</span><span class="r" style="letter-spacing:-0.34px">.</span><span class="r" style="letter-spacing:-0.34px">.</span><span class="r" style="letter-spacing:-0.34px">.</span></div>
<div class="t" style="left:1127.40px;top:176.00px;line-height:20px;font-size:12.0px;color:#808078;"><span class="r" style="letter-spacing:-0.06px">Precombined</span><span class="r" style="letter-spacing:1.66px">\</span><span class="r" style="letter-spacing:-0.67px">0004280D</span><span class="r" style="letter-spacing:-0.85px">_</span><span class="r" style="letter-spacing:-0.73px">80099B</span><span class="r" style="letter-spacing:-0.34px">.</span><span class="r" style="letter-spacing:-0.34px">.</span><span class="r" style="letter-spacing:-0.34px">.</span></div>
<div class="hd" style="left:563px;top:205px;width:13px"></div>
<div class="t" style="left:580.30px;top:196.00px;line-height:20px;font-size:12.0px;color:#108810;"><span class="r" style="letter-spacing:0.05px">Combined</span><span class="r" style="letter-spacing:-0.20px"> </span><span class="r" style="letter-spacing:0.05px">Mesh</span></div>
<div class="t" style="left:727.40px;top:196.00px;line-height:20px;font-size:12.0px;color:#808078;"><span class="r" style="letter-spacing:-0.06px">Precombined</span><span class="r" style="letter-spacing:1.66px">\</span><span class="r" style="letter-spacing:-0.67px">0004280D</span><span class="r" style="letter-spacing:-0.85px">_</span><span class="r" style="letter-spacing:-0.73px">80099B</span><span class="r" style="letter-spacing:-0.34px">.</span><span class="r" style="letter-spacing:-0.34px">.</span><span class="r" style="letter-spacing:-0.34px">.</span></div>
<div class="t" style="left:927.40px;top:196.00px;line-height:20px;font-size:12.0px;color:#808078;"><span class="r" style="letter-spacing:-0.06px">Precombined</span><span class="r" style="letter-spacing:1.66px">\</span><span class="r" style="letter-spacing:-0.67px">0004280D</span><span class="r" style="letter-spacing:-0.85px">_</span><span class="r" style="letter-spacing:-0.73px">80099B</span><span class="r" style="letter-spacing:-0.34px">.</span><span class="r" style="letter-spacing:-0.34px">.</span><span class="r" style="letter-spacing:-0.34px">.</span></div>
<div class="t" style="left:1127.40px;top:196.00px;line-height:20px;font-size:12.0px;color:#808078;"><span class="r" style="letter-spacing:-0.06px">Precombined</span><span class="r" style="letter-spacing:1.66px">\</span><span class="r" style="letter-spacing:-0.67px">0004280D</span><span class="r" style="letter-spacing:-0.85px">_</span><span class="r" style="letter-spacing:-0.73px">80099B</span><span class="r" style="letter-spacing:-0.34px">.</span><span class="r" style="letter-spacing:-0.34px">.</span><span class="r" style="letter-spacing:-0.34px">.</span></div>
<div class="hd" style="left:563px;top:225px;width:13px"></div>
<div class="t" style="left:580.30px;top:216.00px;line-height:20px;font-size:12.0px;color:#108810;"><span class="r" style="letter-spacing:0.05px">Combined</span><span class="r" style="letter-spacing:-0.20px"> </span><span class="r" style="letter-spacing:0.05px">Mesh</span></div>
<div class="t" style="left:727.40px;top:216.00px;line-height:20px;font-size:12.0px;color:#808078;"><span class="r" style="letter-spacing:-0.06px">Precombined</span><span class="r" style="letter-spacing:1.66px">\</span><span class="r" style="letter-spacing:-0.67px">0004280D</span><span class="r" style="letter-spacing:-0.85px">_</span><span class="r" style="letter-spacing:-0.73px">80099B</span><span class="r" style="letter-spacing:-0.34px">.</span><span class="r" style="letter-spacing:-0.34px">.</span><span class="r" style="letter-spacing:-0.34px">.</span></div>
<div class="t" style="left:927.40px;top:216.00px;line-height:20px;font-size:12.0px;color:#808078;"><span class="r" style="letter-spacing:-0.06px">Precombined</span><span class="r" style="letter-spacing:1.66px">\</span><span class="r" style="letter-spacing:-0.67px">0004280D</span><span class="r" style="letter-spacing:-0.85px">_</span><span class="r" style="letter-spacing:-0.73px">80099B</span><span class="r" style="letter-spacing:-0.34px">.</span><span class="r" style="letter-spacing:-0.34px">.</span><span class="r" style="letter-spacing:-0.34px">.</span></div>
<div class="t" style="left:1127.40px;top:216.00px;line-height:20px;font-size:12.0px;color:#808078;"><span class="r" style="letter-spacing:-0.06px">Precombined</span><span class="r" style="letter-spacing:1.66px">\</span><span class="r" style="letter-spacing:-0.67px">0004280D</span><span class="r" style="letter-spacing:-0.85px">_</span><span class="r" style="letter-spacing:-0.73px">80099B</span><span class="r" style="letter-spacing:-0.34px">.</span><span class="r" style="letter-spacing:-0.34px">.</span><span class="r" style="letter-spacing:-0.34px">.</span></div>
<div class="hd" style="left:563px;top:245px;width:13px"></div>
<div class="t" style="left:580.30px;top:236.00px;line-height:20px;font-size:12.0px;color:#108810;"><span class="r" style="letter-spacing:0.05px">Combined</span><span class="r" style="letter-spacing:-0.20px"> </span><span class="r" style="letter-spacing:0.05px">Mesh</span></div>
<div class="t" style="left:727.40px;top:236.00px;line-height:20px;font-size:12.0px;color:#808078;"><span class="r" style="letter-spacing:-0.06px">Precombined</span><span class="r" style="letter-spacing:1.66px">\</span><span class="r" style="letter-spacing:-0.67px">0004280D</span><span class="r" style="letter-spacing:-0.85px">_</span><span class="r" style="letter-spacing:-0.73px">80099B</span><span class="r" style="letter-spacing:-0.34px">.</span><span class="r" style="letter-spacing:-0.34px">.</span><span class="r" style="letter-spacing:-0.34px">.</span></div>
<div class="t" style="left:927.40px;top:236.00px;line-height:20px;font-size:12.0px;color:#808078;"><span class="r" style="letter-spacing:-0.06px">Precombined</span><span class="r" style="letter-spacing:1.66px">\</span><span class="r" style="letter-spacing:-0.67px">0004280D</span><span class="r" style="letter-spacing:-0.85px">_</span><span class="r" style="letter-spacing:-0.73px">80099B</span><span class="r" style="letter-spacing:-0.34px">.</span><span class="r" style="letter-spacing:-0.34px">.</span><span class="r" style="letter-spacing:-0.34px">.</span></div>
<div class="t" style="left:1127.40px;top:236.00px;line-height:20px;font-size:12.0px;color:#808078;"><span class="r" style="letter-spacing:-0.06px">Precombined</span><span class="r" style="letter-spacing:1.66px">\</span><span class="r" style="letter-spacing:-0.67px">0004280D</span><span class="r" style="letter-spacing:-0.85px">_</span><span class="r" style="letter-spacing:-0.73px">80099B</span><span class="r" style="letter-spacing:-0.34px">.</span><span class="r" style="letter-spacing:-0.34px">.</span><span class="r" style="letter-spacing:-0.34px">.</span></div>
<div class="hd" style="left:563px;top:265px;width:13px"></div>
<div class="t" style="left:580.30px;top:256.00px;line-height:20px;font-size:12.0px;color:#d80a28;"><span class="r" style="letter-spacing:0.05px">Combined</span><span class="r" style="letter-spacing:-0.20px"> </span><span class="r" style="letter-spacing:0.05px">Mesh</span></div>
<div class="t" style="left:727.40px;top:256.00px;line-height:20px;font-size:12.0px;color:#d80a28;"><span class="r" style="letter-spacing:-0.06px">Precombined</span><span class="r" style="letter-spacing:1.66px">\</span><span class="r" style="letter-spacing:-0.67px">0004280D</span><span class="r" style="letter-spacing:-0.85px">_</span><span class="r" style="letter-spacing:-0.73px">80099B</span><span class="r" style="letter-spacing:-0.34px">.</span><span class="r" style="letter-spacing:-0.34px">.</span><span class="r" style="letter-spacing:-0.34px">.</span></div>
<div class="t" style="left:927.40px;top:256.00px;line-height:20px;font-size:12.0px;color:#d80a28;"><span class="r" style="letter-spacing:-0.06px">Precombined</span><span class="r" style="letter-spacing:1.66px">\</span><span class="r" style="letter-spacing:-0.67px">0004280D</span><span class="r" style="letter-spacing:-0.85px">_</span><span class="r" style="letter-spacing:-0.73px">80099B</span><span class="r" style="letter-spacing:-0.34px">.</span><span class="r" style="letter-spacing:-0.34px">.</span><span class="r" style="letter-spacing:-0.34px">.</span></div>
<div class="t" style="left:1127.40px;top:256.00px;line-height:20px;font-size:12.0px;color:#d80a28;"><span class="r" style="letter-spacing:-0.06px">Precombined</span><span class="r" style="letter-spacing:1.66px">\</span><span class="r" style="letter-spacing:-0.67px">0004280D</span><span class="r" style="letter-spacing:-0.85px">_</span><span class="r" style="letter-spacing:-0.73px">80099B</span><span class="r" style="letter-spacing:-0.34px">.</span><span class="r" style="letter-spacing:-0.34px">.</span><span class="r" style="letter-spacing:-0.34px">.</span></div>
<div class="hd" style="left:563px;top:285px;width:13px"></div>
<div class="t" style="left:580.30px;top:276.00px;line-height:20px;font-size:12.0px;color:#108810;"><span class="r" style="letter-spacing:0.05px">Combined</span><span class="r" style="letter-spacing:-0.20px"> </span><span class="r" style="letter-spacing:0.05px">Mesh</span></div>
<div class="t" style="left:727.40px;top:276.00px;line-height:20px;font-size:12.0px;color:#808078;"><span class="r" style="letter-spacing:-0.06px">Precombined</span><span class="r" style="letter-spacing:1.66px">\</span><span class="r" style="letter-spacing:-0.67px">0004280D</span><span class="r" style="letter-spacing:-0.85px">_</span><span class="r" style="letter-spacing:-0.73px">80099B</span><span class="r" style="letter-spacing:-0.34px">.</span><span class="r" style="letter-spacing:-0.34px">.</span><span class="r" style="letter-spacing:-0.34px">.</span></div>
<div class="t" style="left:927.40px;top:276.00px;line-height:20px;font-size:12.0px;color:#808078;"><span class="r" style="letter-spacing:-0.06px">Precombined</span><span class="r" style="letter-spacing:1.66px">\</span><span class="r" style="letter-spacing:-0.67px">0004280D</span><span class="r" style="letter-spacing:-0.85px">_</span><span class="r" style="letter-spacing:-0.73px">80099B</span><span class="r" style="letter-spacing:-0.34px">.</span><span class="r" style="letter-spacing:-0.34px">.</span><span class="r" style="letter-spacing:-0.34px">.</span></div>
<div class="t" style="left:1127.40px;top:276.00px;line-height:20px;font-size:12.0px;color:#808078;"><span class="r" style="letter-spacing:-0.06px">Precombined</span><span class="r" style="letter-spacing:1.66px">\</span><span class="r" style="letter-spacing:-0.67px">0004280D</span><span class="r" style="letter-spacing:-0.85px">_</span><span class="r" style="letter-spacing:-0.73px">80099B</span><span class="r" style="letter-spacing:-0.34px">.</span><span class="r" style="letter-spacing:-0.34px">.</span><span class="r" style="letter-spacing:-0.34px">.</span></div>
<div class="hd" style="left:563px;top:305px;width:13px"></div>
<div class="t" style="left:580.30px;top:296.00px;line-height:20px;font-size:12.0px;color:#108810;"><span class="r" style="letter-spacing:0.05px">Combined</span><span class="r" style="letter-spacing:-0.20px"> </span><span class="r" style="letter-spacing:0.05px">Mesh</span></div>
<div class="t" style="left:727.40px;top:296.00px;line-height:20px;font-size:12.0px;color:#808078;"><span class="r" style="letter-spacing:-0.06px">Precombined</span><span class="r" style="letter-spacing:1.66px">\</span><span class="r" style="letter-spacing:-0.67px">0004280D</span><span class="r" style="letter-spacing:-0.85px">_</span><span class="r" style="letter-spacing:-0.73px">80099B</span><span class="r" style="letter-spacing:-0.34px">.</span><span class="r" style="letter-spacing:-0.34px">.</span><span class="r" style="letter-spacing:-0.34px">.</span></div>
<div class="t" style="left:927.40px;top:296.00px;line-height:20px;font-size:12.0px;color:#808078;"><span class="r" style="letter-spacing:-0.06px">Precombined</span><span class="r" style="letter-spacing:1.66px">\</span><span class="r" style="letter-spacing:-0.67px">0004280D</span><span class="r" style="letter-spacing:-0.85px">_</span><span class="r" style="letter-spacing:-0.73px">80099B</span><span class="r" style="letter-spacing:-0.34px">.</span><span class="r" style="letter-spacing:-0.34px">.</span><span class="r" style="letter-spacing:-0.34px">.</span></div>
<div class="t" style="left:1127.40px;top:296.00px;line-height:20px;font-size:12.0px;color:#808078;"><span class="r" style="letter-spacing:-0.06px">Precombined</span><span class="r" style="letter-spacing:1.66px">\</span><span class="r" style="letter-spacing:-0.67px">0004280D</span><span class="r" style="letter-spacing:-0.85px">_</span><span class="r" style="letter-spacing:-0.73px">80099B</span><span class="r" style="letter-spacing:-0.34px">.</span><span class="r" style="letter-spacing:-0.34px">.</span><span class="r" style="letter-spacing:-0.34px">.</span></div>
<div class="hd" style="left:563px;top:325px;width:13px"></div>
<div class="t" style="left:580.30px;top:316.00px;line-height:20px;font-size:12.0px;color:#108810;"><span class="r" style="letter-spacing:0.05px">Combined</span><span class="r" style="letter-spacing:-0.20px"> </span><span class="r" style="letter-spacing:0.05px">Mesh</span></div>
<div class="t" style="left:727.40px;top:316.00px;line-height:20px;font-size:12.0px;color:#808078;"><span class="r" style="letter-spacing:-0.09px">Precombined</span><span class="r" style="letter-spacing:1.64px">\</span><span class="r" style="letter-spacing:-0.70px">0004280D</span><span class="r" style="letter-spacing:-0.85px">_</span><span class="r" style="letter-spacing:-0.85px">D495E0</span><span class="r" style="letter-spacing:-0.36px">.</span><span class="r" style="letter-spacing:-0.36px">.</span><span class="r" style="letter-spacing:-0.36px">.</span></div>
<div class="t" style="left:927.40px;top:316.00px;line-height:20px;font-size:12.0px;color:#808078;"><span class="r" style="letter-spacing:-0.09px">Precombined</span><span class="r" style="letter-spacing:1.64px">\</span><span class="r" style="letter-spacing:-0.70px">0004280D</span><span class="r" style="letter-spacing:-0.85px">_</span><span class="r" style="letter-spacing:-0.85px">D495E0</span><span class="r" style="letter-spacing:-0.36px">.</span><span class="r" style="letter-spacing:-0.36px">.</span><span class="r" style="letter-spacing:-0.36px">.</span></div>
<div class="t" style="left:1127.40px;top:316.00px;line-height:20px;font-size:12.0px;color:#808078;"><span class="r" style="letter-spacing:-0.09px">Precombined</span><span class="r" style="letter-spacing:1.64px">\</span><span class="r" style="letter-spacing:-0.70px">0004280D</span><span class="r" style="letter-spacing:-0.85px">_</span><span class="r" style="letter-spacing:-0.85px">D495E0</span><span class="r" style="letter-spacing:-0.36px">.</span><span class="r" style="letter-spacing:-0.36px">.</span><span class="r" style="letter-spacing:-0.36px">.</span></div>
<div class="hd" style="left:563px;top:345px;width:13px"></div>
<div class="t" style="left:580.30px;top:336.00px;line-height:20px;font-size:12.0px;color:#108810;"><span class="r" style="letter-spacing:0.05px">Combined</span><span class="r" style="letter-spacing:-0.20px"> </span><span class="r" style="letter-spacing:0.05px">Mesh</span></div>
<div class="t" style="left:727.40px;top:336.00px;line-height:20px;font-size:12.0px;color:#808078;"><span class="r" style="letter-spacing:-0.06px">Precombined</span><span class="r" style="letter-spacing:1.67px">\</span><span class="r" style="letter-spacing:-0.67px">0004280D</span><span class="r" style="letter-spacing:-0.85px">_</span><span class="r" style="letter-spacing:-0.72px">D58B61</span><span class="r" style="letter-spacing:-0.33px">.</span><span class="r" style="letter-spacing:-0.33px">.</span><span class="r" style="letter-spacing:-0.33px">.</span></div>
<div class="t" style="left:927.40px;top:336.00px;line-height:20px;font-size:12.0px;color:#808078;"><span class="r" style="letter-spacing:-0.06px">Precombined</span><span class="r" style="letter-spacing:1.67px">\</span><span class="r" style="letter-spacing:-0.67px">0004280D</span><span class="r" style="letter-spacing:-0.85px">_</span><span class="r" style="letter-spacing:-0.72px">D58B61</span><span class="r" style="letter-spacing:-0.33px">.</span><span class="r" style="letter-spacing:-0.33px">.</span><span class="r" style="letter-spacing:-0.33px">.</span></div>
<div class="t" style="left:1127.40px;top:336.00px;line-height:20px;font-size:12.0px;color:#808078;"><span class="r" style="letter-spacing:-0.06px">Precombined</span><span class="r" style="letter-spacing:1.67px">\</span><span class="r" style="letter-spacing:-0.67px">0004280D</span><span class="r" style="letter-spacing:-0.85px">_</span><span class="r" style="letter-spacing:-0.72px">D58B61</span><span class="r" style="letter-spacing:-0.33px">.</span><span class="r" style="letter-spacing:-0.33px">.</span><span class="r" style="letter-spacing:-0.33px">.</span></div>
<div class="hd" style="left:563px;top:365px;width:13px"></div>
<div class="t" style="left:580.30px;top:356.00px;line-height:20px;font-size:12.0px;color:#108810;"><span class="r" style="letter-spacing:0.05px">Combined</span><span class="r" style="letter-spacing:-0.20px"> </span><span class="r" style="letter-spacing:0.05px">Mesh</span></div>
<div class="t" style="left:727.40px;top:356.00px;line-height:20px;font-size:12.0px;color:#808078;"><span class="r" style="letter-spacing:-0.06px">Precombined</span><span class="r" style="letter-spacing:1.67px">\</span><span class="r" style="letter-spacing:-0.67px">0004280D</span><span class="r" style="letter-spacing:-0.85px">_</span><span class="r" style="letter-spacing:-0.83px">DF1B05</span><span class="r" style="letter-spacing:-0.33px">.</span><span class="r" style="letter-spacing:-0.33px">.</span><span class="r" style="letter-spacing:-0.33px">.</span></div>
<div class="t" style="left:927.40px;top:356.00px;line-height:20px;font-size:12.0px;color:#808078;"><span class="r" style="letter-spacing:-0.06px">Precombined</span><span class="r" style="letter-spacing:1.67px">\</span><span class="r" style="letter-spacing:-0.67px">0004280D</span><span class="r" style="letter-spacing:-0.85px">_</span><span class="r" style="letter-spacing:-0.83px">DF1B05</span><span class="r" style="letter-spacing:-0.33px">.</span><span class="r" style="letter-spacing:-0.33px">.</span><span class="r" style="letter-spacing:-0.33px">.</span></div>
<div class="t" style="left:1127.40px;top:356.00px;line-height:20px;font-size:12.0px;color:#808078;"><span class="r" style="letter-spacing:-0.06px">Precombined</span><span class="r" style="letter-spacing:1.67px">\</span><span class="r" style="letter-spacing:-0.67px">0004280D</span><span class="r" style="letter-spacing:-0.85px">_</span><span class="r" style="letter-spacing:-0.83px">DF1B05</span><span class="r" style="letter-spacing:-0.33px">.</span><span class="r" style="letter-spacing:-0.33px">.</span><span class="r" style="letter-spacing:-0.33px">.</span></div>
<div class="hd" style="left:563px;top:385px;width:13px"></div>
<div class="t" style="left:580.30px;top:376.00px;line-height:20px;font-size:12.0px;color:#108810;"><span class="r" style="letter-spacing:0.05px">Combined</span><span class="r" style="letter-spacing:-0.20px"> </span><span class="r" style="letter-spacing:0.05px">Mesh</span></div>
<div class="t" style="left:727.40px;top:376.00px;line-height:20px;font-size:12.0px;color:#808078;"><span class="r" style="letter-spacing:-0.17px">Precombined</span><span class="r" style="letter-spacing:1.56px">\</span><span class="r" style="letter-spacing:-0.78px">0004280D</span><span class="r" style="letter-spacing:-0.85px">_</span><span class="r" style="letter-spacing:-0.85px">E2E040F</span><span class="r" style="letter-spacing:-0.44px">.</span><span class="r" style="letter-spacing:-0.44px">.</span><span class="r" style="letter-spacing:-0.44px">.</span></div>
<div class="t" style="left:927.40px;top:376.00px;line-height:20px;font-size:12.0px;color:#808078;"><span class="r" style="letter-spacing:-0.17px">Precombined</span><span class="r" style="letter-spacing:1.56px">\</span><span class="r" style="letter-spacing:-0.78px">0004280D</span><span class="r" style="letter-spacing:-0.85px">_</span><span class="r" style="letter-spacing:-0.85px">E2E040F</span><span class="r" style="letter-spacing:-0.44px">.</span><span class="r" style="letter-spacing:-0.44px">.</span><span class="r" style="letter-spacing:-0.44px">.</span></div>
<div class="t" style="left:1127.40px;top:376.00px;line-height:20px;font-size:12.0px;color:#808078;"><span class="r" style="letter-spacing:-0.17px">Precombined</span><span class="r" style="letter-spacing:1.56px">\</span><span class="r" style="letter-spacing:-0.78px">0004280D</span><span class="r" style="letter-spacing:-0.85px">_</span><span class="r" style="letter-spacing:-0.85px">E2E040F</span><span class="r" style="letter-spacing:-0.44px">.</span><span class="r" style="letter-spacing:-0.44px">.</span><span class="r" style="letter-spacing:-0.44px">.</span></div>
<div class="hd" style="left:563px;top:405px;width:13px"></div>
<div class="t" style="left:580.30px;top:396.00px;line-height:20px;font-size:12.0px;color:#108810;"><span class="r" style="letter-spacing:0.05px">Combined</span><span class="r" style="letter-spacing:-0.20px"> </span><span class="r" style="letter-spacing:0.05px">Mesh</span></div>
<div class="t" style="left:727.40px;top:396.00px;line-height:20px;font-size:12.0px;color:#808078;"><span class="r" style="letter-spacing:-0.11px">Precombined</span><span class="r" style="letter-spacing:1.62px">\</span><span class="r" style="letter-spacing:-0.72px">0004280D</span><span class="r" style="letter-spacing:-0.85px">_</span><span class="r" style="letter-spacing:-0.85px">E639F61</span><span class="r" style="letter-spacing:-0.38px">.</span><span class="r" style="letter-spacing:-0.38px">.</span><span class="r" style="letter-spacing:-0.38px">.</span></div>
<div class="t" style="left:927.40px;top:396.00px;line-height:20px;font-size:12.0px;color:#808078;"><span class="r" style="letter-spacing:-0.11px">Precombined</span><span class="r" style="letter-spacing:1.62px">\</span><span class="r" style="letter-spacing:-0.72px">0004280D</span><span class="r" style="letter-spacing:-0.85px">_</span><span class="r" style="letter-spacing:-0.85px">E639F61</span><span class="r" style="letter-spacing:-0.38px">.</span><span class="r" style="letter-spacing:-0.38px">.</span><span class="r" style="letter-spacing:-0.38px">.</span></div>
<div class="t" style="left:1127.40px;top:396.00px;line-height:20px;font-size:12.0px;color:#808078;"><span class="r" style="letter-spacing:-0.11px">Precombined</span><span class="r" style="letter-spacing:1.62px">\</span><span class="r" style="letter-spacing:-0.72px">0004280D</span><span class="r" style="letter-spacing:-0.85px">_</span><span class="r" style="letter-spacing:-0.85px">E639F61</span><span class="r" style="letter-spacing:-0.38px">.</span><span class="r" style="letter-spacing:-0.38px">.</span><span class="r" style="letter-spacing:-0.38px">.</span></div>
<div class="hd" style="left:563px;top:425px;width:13px"></div>
<div class="t" style="left:580.30px;top:416.00px;line-height:20px;font-size:12.0px;color:#d80a28;"><span class="r" style="letter-spacing:0.05px">Combined</span><span class="r" style="letter-spacing:-0.20px"> </span><span class="r" style="letter-spacing:0.05px">Mesh</span></div>
<div class="t" style="left:727.40px;top:416.00px;line-height:20px;font-size:12.0px;color:#d80a28;"><span class="r" style="letter-spacing:-0.07px">Precombined</span><span class="r" style="letter-spacing:1.66px">\</span><span class="r" style="letter-spacing:-0.68px">0004280D</span><span class="r" style="letter-spacing:-0.85px">_</span><span class="r" style="letter-spacing:-0.85px">FF6720</span><span class="r" style="letter-spacing:-0.34px">.</span><span class="r" style="letter-spacing:-0.34px">.</span><span class="r" style="letter-spacing:-0.34px">.</span></div>
<div class="t" style="left:927.40px;top:416.00px;line-height:20px;font-size:12.0px;color:#d80a28;"><span class="r" style="letter-spacing:-0.07px">Precombined</span><span class="r" style="letter-spacing:1.66px">\</span><span class="r" style="letter-spacing:-0.68px">0004280D</span><span class="r" style="letter-spacing:-0.85px">_</span><span class="r" style="letter-spacing:-0.85px">FF6720</span><span class="r" style="letter-spacing:-0.34px">.</span><span class="r" style="letter-spacing:-0.34px">.</span><span class="r" style="letter-spacing:-0.34px">.</span></div>
<div class="t" style="left:1127.40px;top:416.00px;line-height:20px;font-size:12.0px;color:#d80a28;"><span class="r" style="letter-spacing:-0.07px">Precombined</span><span class="r" style="letter-spacing:1.66px">\</span><span class="r" style="letter-spacing:-0.68px">0004280D</span><span class="r" style="letter-spacing:-0.85px">_</span><span class="r" style="letter-spacing:-0.85px">FF6720</span><span class="r" style="letter-spacing:-0.34px">.</span><span class="r" style="letter-spacing:-0.34px">.</span><span class="r" style="letter-spacing:-0.34px">.</span></div>
<div class="hd" style="left:549px;top:445px;width:7px"></div>
<div class="bx" style="left:540px;top:441px"></div>
<div class="t" style="left:560.30px;top:436.00px;line-height:20px;font-size:12.0px;color:#d80a28;"><span class="r" style="letter-spacing:-0.46px">References</span><span class="r" style="letter-spacing:-0.36px"> </span><span class="r" style="letter-spacing:-0.02px">(</span><span class="r" style="letter-spacing:-0.08px">sorted</span><span class="r" style="letter-spacing:-0.02px">)</span></div>
<div class="hd" style="left:569px;top:465px;width:7px"></div>
<div class="bx" style="left:560px;top:461px"></div>
<div class="t" style="left:580.30px;top:456.00px;line-height:20px;font-size:12.0px;color:#108810;"><span class="r" style="letter-spacing:-0.32px">Reference</span></div>
<div class="hd" style="left:583px;top:485px;width:13px"></div>
<div class="t" style="left:600.30px;top:476.00px;line-height:20px;font-size:12.0px;color:#108810;"><span class="r" style="letter-spacing:-0.32px">Reference</span></div>
<div class="t" style="left:727.40px;top:476.00px;line-height:20px;font-size:12.0px;color:#808078;"><span class="r" style="letter-spacing:0.57px">[</span><span class="r" style="letter-spacing:-0.85px">REFR</span><span class="r" style="letter-spacing:-0.43px">:</span><span class="r" style="letter-spacing:-0.77px">00043240</span><span class="r" style="letter-spacing:0.57px">]</span><span class="r" style="letter-spacing:-0.43px"> </span><span class="r" style="letter-spacing:-0.09px">(</span><span class="r" style="letter-spacing:-0.38px">places</span><span class="r" style="letter-spacing:-0.43px"> </span><span class="r" style="letter-spacing:-0.48px">HitSmR</span><span class="r" style="letter-spacing:-0.43px">.</span><span class="r" style="letter-spacing:-0.43px">.</span><span class="r" style="letter-spacing:-0.43px">.</span></div>
<div class="t" style="left:927.40px;top:476.00px;line-height:20px;font-size:12.0px;color:#808078;"><span class="r" style="letter-spacing:0.57px">[</span><span class="r" style="letter-spacing:-0.85px">REFR</span><span class="r" style="letter-spacing:-0.43px">:</span><span class="r" style="letter-spacing:-0.77px">00043240</span><span class="r" style="letter-spacing:0.57px">]</span><span class="r" style="letter-spacing:-0.43px"> </span><span class="r" style="letter-spacing:-0.09px">(</span><span class="r" style="letter-spacing:-0.38px">places</span><span class="r" style="letter-spacing:-0.43px"> </span><span class="r" style="letter-spacing:-0.48px">HitSmR</span><span class="r" style="letter-spacing:-0.43px">.</span><span class="r" style="letter-spacing:-0.43px">.</span><span class="r" style="letter-spacing:-0.43px">.</span></div>
<div class="t" style="left:1127.40px;top:476.00px;line-height:20px;font-size:12.0px;color:#808078;"><span class="r" style="letter-spacing:0.57px">[</span><span class="r" style="letter-spacing:-0.85px">REFR</span><span class="r" style="letter-spacing:-0.43px">:</span><span class="r" style="letter-spacing:-0.77px">00043240</span><span class="r" style="letter-spacing:0.57px">]</span><span class="r" style="letter-spacing:-0.43px"> </span><span class="r" style="letter-spacing:-0.09px">(</span><span class="r" style="letter-spacing:-0.38px">places</span><span class="r" style="letter-spacing:-0.43px"> </span><span class="r" style="letter-spacing:-0.48px">HitSmR</span><span class="r" style="letter-spacing:-0.43px">.</span><span class="r" style="letter-spacing:-0.43px">.</span><span class="r" style="letter-spacing:-0.43px">.</span></div>
<div class="hd" style="left:583px;top:505px;width:13px"></div>
<div class="t" style="left:600.30px;top:496.00px;line-height:20px;font-size:12.0px;color:#108810;"><span class="r" style="letter-spacing:0.05px">Combined</span><span class="r" style="letter-spacing:-0.20px"> </span><span class="r" style="letter-spacing:0.05px">Mesh</span></div>
<div class="t" style="left:727.40px;top:496.00px;line-height:20px;font-size:12.0px;color:#808078;"><span class="r" style="letter-spacing:-0.08px">Precombined</span><span class="r" style="letter-spacing:1.65px">\</span><span class="r" style="letter-spacing:-0.69px">0004280D</span><span class="r" style="letter-spacing:-0.85px">_</span><span class="r" style="letter-spacing:-0.74px">00099B</span><span class="r" style="letter-spacing:-0.35px">.</span><span class="r" style="letter-spacing:-0.35px">.</span><span class="r" style="letter-spacing:-0.35px">.</span></div>
<div class="t" style="left:927.40px;top:496.00px;line-height:20px;font-size:12.0px;color:#808078;"><span class="r" style="letter-spacing:-0.08px">Precombined</span><span class="r" style="letter-spacing:1.65px">\</span><span class="r" style="letter-spacing:-0.69px">0004280D</span><span class="r" style="letter-spacing:-0.85px">_</span><span class="r" style="letter-spacing:-0.74px">00099B</span><span class="r" style="letter-spacing:-0.35px">.</span><span class="r" style="letter-spacing:-0.35px">.</span><span class="r" style="letter-spacing:-0.35px">.</span></div>
<div class="t" style="left:1127.40px;top:496.00px;line-height:20px;font-size:12.0px;color:#808078;"><span class="r" style="letter-spacing:-0.08px">Precombined</span><span class="r" style="letter-spacing:1.65px">\</span><span class="r" style="letter-spacing:-0.69px">0004280D</span><span class="r" style="letter-spacing:-0.85px">_</span><span class="r" style="letter-spacing:-0.74px">00099B</span><span class="r" style="letter-spacing:-0.35px">.</span><span class="r" style="letter-spacing:-0.35px">.</span><span class="r" style="letter-spacing:-0.35px">.</span></div>
<div class="hd" style="left:569px;top:525px;width:7px"></div>
<div class="bx" style="left:560px;top:521px"></div>
<div class="t" style="left:580.30px;top:516.00px;line-height:20px;font-size:12.0px;color:#108810;"><span class="r" style="letter-spacing:-0.32px">Reference</span></div>
<div class="hd" style="left:583px;top:545px;width:13px"></div>
<div class="t" style="left:600.30px;top:536.00px;line-height:20px;font-size:12.0px;color:#108810;"><span class="r" style="letter-spacing:-0.32px">Reference</span></div>
<div class="t" style="left:727.40px;top:536.00px;line-height:20px;font-size:12.0px;color:#808078;"><span class="r" style="letter-spacing:0.57px">[</span><span class="r" style="letter-spacing:-0.85px">REFR</span><span class="r" style="letter-spacing:-0.43px">:</span><span class="r" style="letter-spacing:-0.77px">00043241</span><span class="r" style="letter-spacing:0.57px">]</span><span class="r" style="letter-spacing:-0.43px"> </span><span class="r" style="letter-spacing:-0.09px">(</span><span class="r" style="letter-spacing:-0.38px">places</span><span class="r" style="letter-spacing:-0.43px"> </span><span class="r" style="letter-spacing:-0.48px">HitSmR</span><span class="r" style="letter-spacing:-0.43px">.</span><span class="r" style="letter-spacing:-0.43px">.</span><span class="r" style="letter-spacing:-0.43px">.</span></div>
<div class="t" style="left:927.40px;top:536.00px;line-height:20px;font-size:12.0px;color:#808078;"><span class="r" style="letter-spacing:0.57px">[</span><span class="r" style="letter-spacing:-0.85px">REFR</span><span class="r" style="letter-spacing:-0.43px">:</span><span class="r" style="letter-spacing:-0.77px">00043241</span><span class="r" style="letter-spacing:0.57px">]</span><span class="r" style="letter-spacing:-0.43px"> </span><span class="r" style="letter-spacing:-0.09px">(</span><span class="r" style="letter-spacing:-0.38px">places</span><span class="r" style="letter-spacing:-0.43px"> </span><span class="r" style="letter-spacing:-0.48px">HitSmR</span><span class="r" style="letter-spacing:-0.43px">.</span><span class="r" style="letter-spacing:-0.43px">.</span><span class="r" style="letter-spacing:-0.43px">.</span></div>
<div class="t" style="left:1127.40px;top:536.00px;line-height:20px;font-size:12.0px;color:#808078;"><span class="r" style="letter-spacing:0.57px">[</span><span class="r" style="letter-spacing:-0.85px">REFR</span><span class="r" style="letter-spacing:-0.43px">:</span><span class="r" style="letter-spacing:-0.77px">00043241</span><span class="r" style="letter-spacing:0.57px">]</span><span class="r" style="letter-spacing:-0.43px"> </span><span class="r" style="letter-spacing:-0.09px">(</span><span class="r" style="letter-spacing:-0.38px">places</span><span class="r" style="letter-spacing:-0.43px"> </span><span class="r" style="letter-spacing:-0.48px">HitSmR</span><span class="r" style="letter-spacing:-0.43px">.</span><span class="r" style="letter-spacing:-0.43px">.</span><span class="r" style="letter-spacing:-0.43px">.</span></div>
<div class="hd" style="left:583px;top:565px;width:13px"></div>
<div class="t" style="left:600.30px;top:556.00px;line-height:20px;font-size:12.0px;color:#108810;"><span class="r" style="letter-spacing:0.05px">Combined</span><span class="r" style="letter-spacing:-0.20px"> </span><span class="r" style="letter-spacing:0.05px">Mesh</span></div>
<div class="t" style="left:727.40px;top:556.00px;line-height:20px;font-size:12.0px;color:#808078;"><span class="r" style="letter-spacing:-0.08px">Precombined</span><span class="r" style="letter-spacing:1.65px">\</span><span class="r" style="letter-spacing:-0.69px">0004280D</span><span class="r" style="letter-spacing:-0.85px">_</span><span class="r" style="letter-spacing:-0.74px">00099B</span><span class="r" style="letter-spacing:-0.35px">.</span><span class="r" style="letter-spacing:-0.35px">.</span><span class="r" style="letter-spacing:-0.35px">.</span></div>
<div class="t" style="left:927.40px;top:556.00px;line-height:20px;font-size:12.0px;color:#808078;"><span class="r" style="letter-spacing:-0.08px">Precombined</span><span class="r" style="letter-spacing:1.65px">\</span><span class="r" style="letter-spacing:-0.69px">0004280D</span><span class="r" style="letter-spacing:-0.85px">_</span><span class="r" style="letter-spacing:-0.74px">00099B</span><span class="r" style="letter-spacing:-0.35px">.</span><span class="r" style="letter-spacing:-0.35px">.</span><span class="r" style="letter-spacing:-0.35px">.</span></div>
<div class="t" style="left:1127.40px;top:556.00px;line-height:20px;font-size:12.0px;color:#808078;"><span class="r" style="letter-spacing:-0.08px">Precombined</span><span class="r" style="letter-spacing:1.65px">\</span><span class="r" style="letter-spacing:-0.69px">0004280D</span><span class="r" style="letter-spacing:-0.85px">_</span><span class="r" style="letter-spacing:-0.74px">00099B</span><span class="r" style="letter-spacing:-0.35px">.</span><span class="r" style="letter-spacing:-0.35px">.</span><span class="r" style="letter-spacing:-0.35px">.</span></div>
<div class="hd" style="left:569px;top:585px;width:7px"></div>
<div class="bx" style="left:560px;top:581px"></div>
<div class="t" style="left:580.30px;top:576.00px;line-height:20px;font-size:12.0px;color:#108810;"><span class="r" style="letter-spacing:-0.32px">Reference</span></div>
<div class="hd" style="left:583px;top:605px;width:13px"></div>
<div class="t" style="left:600.30px;top:596.00px;line-height:20px;font-size:12.0px;color:#108810;"><span class="r" style="letter-spacing:-0.32px">Reference</span></div>
<div class="t" style="left:727.40px;top:596.00px;line-height:20px;font-size:12.0px;color:#808078;"><span class="r" style="letter-spacing:0.55px">[</span><span class="r" style="letter-spacing:-0.85px">REFR</span><span class="r" style="letter-spacing:-0.45px">:</span><span class="r" style="letter-spacing:-0.79px">00043243</span><span class="r" style="letter-spacing:0.55px">]</span><span class="r" style="letter-spacing:-0.45px"> </span><span class="r" style="letter-spacing:-0.11px">(</span><span class="r" style="letter-spacing:-0.39px">places</span><span class="r" style="letter-spacing:-0.45px"> </span><span class="r" style="letter-spacing:0.01px">HitFloor</span><span class="r" style="letter-spacing:-0.45px">.</span><span class="r" style="letter-spacing:-0.45px">.</span><span class="r" style="letter-spacing:-0.45px">.</span></div>
<div class="t" style="left:927.40px;top:596.00px;line-height:20px;font-size:12.0px;color:#808078;"><span class="r" style="letter-spacing:0.55px">[</span><span class="r" style="letter-spacing:-0.85px">REFR</span><span class="r" style="letter-spacing:-0.45px">:</span><span class="r" style="letter-spacing:-0.79px">00043243</span><span class="r" style="letter-spacing:0.55px">]</span><span class="r" style="letter-spacing:-0.45px"> </span><span class="r" style="letter-spacing:-0.11px">(</span><span class="r" style="letter-spacing:-0.39px">places</span><span class="r" style="letter-spacing:-0.45px"> </span><span class="r" style="letter-spacing:0.01px">HitFloor</span><span class="r" style="letter-spacing:-0.45px">.</span><span class="r" style="letter-spacing:-0.45px">.</span><span class="r" style="letter-spacing:-0.45px">.</span></div>
<div class="t" style="left:1127.40px;top:596.00px;line-height:20px;font-size:12.0px;color:#808078;"><span class="r" style="letter-spacing:0.55px">[</span><span class="r" style="letter-spacing:-0.85px">REFR</span><span class="r" style="letter-spacing:-0.45px">:</span><span class="r" style="letter-spacing:-0.79px">00043243</span><span class="r" style="letter-spacing:0.55px">]</span><span class="r" style="letter-spacing:-0.45px"> </span><span class="r" style="letter-spacing:-0.11px">(</span><span class="r" style="letter-spacing:-0.39px">places</span><span class="r" style="letter-spacing:-0.45px"> </span><span class="r" style="letter-spacing:0.01px">HitFloor</span><span class="r" style="letter-spacing:-0.45px">.</span><span class="r" style="letter-spacing:-0.45px">.</span><span class="r" style="letter-spacing:-0.45px">.</span></div>
<div class="hd" style="left:583px;top:625px;width:13px"></div>
<div class="t" style="left:600.30px;top:616.00px;line-height:20px;font-size:12.0px;color:#108810;"><span class="r" style="letter-spacing:0.05px">Combined</span><span class="r" style="letter-spacing:-0.20px"> </span><span class="r" style="letter-spacing:0.05px">Mesh</span></div>
<div class="t" style="left:727.40px;top:616.00px;line-height:20px;font-size:12.0px;color:#808078;"><span class="r" style="letter-spacing:-0.08px">Precombined</span><span class="r" style="letter-spacing:1.65px">\</span><span class="r" style="letter-spacing:-0.69px">0004280D</span><span class="r" style="letter-spacing:-0.85px">_</span><span class="r" style="letter-spacing:-0.74px">00099B</span><span class="r" style="letter-spacing:-0.35px">.</span><span class="r" style="letter-spacing:-0.35px">.</span><span class="r" style="letter-spacing:-0.35px">.</span></div>
<div class="t" style="left:927.40px;top:616.00px;line-height:20px;font-size:12.0px;color:#808078;"><span class="r" style="letter-spacing:-0.08px">Precombined</span><span class="r" style="letter-spacing:1.65px">\</span><span class="r" style="letter-spacing:-0.69px">0004280D</span><span class="r" style="letter-spacing:-0.85px">_</span><span class="r" style="letter-spacing:-0.74px">00099B</span><span class="r" style="letter-spacing:-0.35px">.</span><span class="r" style="letter-spacing:-0.35px">.</span><span class="r" style="letter-spacing:-0.35px">.</span></div>
<div class="t" style="left:1127.40px;top:616.00px;line-height:20px;font-size:12.0px;color:#808078;"><span class="r" style="letter-spacing:-0.08px">Precombined</span><span class="r" style="letter-spacing:1.65px">\</span><span class="r" style="letter-spacing:-0.69px">0004280D</span><span class="r" style="letter-spacing:-0.85px">_</span><span class="r" style="letter-spacing:-0.74px">00099B</span><span class="r" style="letter-spacing:-0.35px">.</span><span class="r" style="letter-spacing:-0.35px">.</span><span class="r" style="letter-spacing:-0.35px">.</span></div>
<div class="hd" style="left:569px;top:645px;width:7px"></div>
<div class="bx" style="left:560px;top:641px"></div>
<div class="t" style="left:580.30px;top:636.00px;line-height:20px;font-size:12.0px;color:#108810;"><span class="r" style="letter-spacing:-0.32px">Reference</span></div>
<div class="hd" style="left:583px;top:665px;width:13px"></div>
<div class="t" style="left:600.30px;top:656.00px;line-height:20px;font-size:12.0px;color:#108810;"><span class="r" style="letter-spacing:-0.32px">Reference</span></div>
<div class="t" style="left:727.40px;top:656.00px;line-height:20px;font-size:12.0px;color:#808078;"><span class="r" style="letter-spacing:0.55px">[</span><span class="r" style="letter-spacing:-0.85px">REFR</span><span class="r" style="letter-spacing:-0.45px">:</span><span class="r" style="letter-spacing:-0.79px">00043244</span><span class="r" style="letter-spacing:0.55px">]</span><span class="r" style="letter-spacing:-0.45px"> </span><span class="r" style="letter-spacing:-0.11px">(</span><span class="r" style="letter-spacing:-0.39px">places</span><span class="r" style="letter-spacing:-0.45px"> </span><span class="r" style="letter-spacing:0.01px">HitFloor</span><span class="r" style="letter-spacing:-0.45px">.</span><span class="r" style="letter-spacing:-0.45px">.</span><span class="r" style="letter-spacing:-0.45px">.</span></div>
<div class="t" style="left:927.40px;top:656.00px;line-height:20px;font-size:12.0px;color:#808078;"><span class="r" style="letter-spacing:0.55px">[</span><span class="r" style="letter-spacing:-0.85px">REFR</span><span class="r" style="letter-spacing:-0.45px">:</span><span class="r" style="letter-spacing:-0.79px">00043244</span><span class="r" style="letter-spacing:0.55px">]</span><span class="r" style="letter-spacing:-0.45px"> </span><span class="r" style="letter-spacing:-0.11px">(</span><span class="r" style="letter-spacing:-0.39px">places</span><span class="r" style="letter-spacing:-0.45px"> </span><span class="r" style="letter-spacing:0.01px">HitFloor</span><span class="r" style="letter-spacing:-0.45px">.</span><span class="r" style="letter-spacing:-0.45px">.</span><span class="r" style="letter-spacing:-0.45px">.</span></div>
<div class="t" style="left:1127.40px;top:656.00px;line-height:20px;font-size:12.0px;color:#808078;"><span class="r" style="letter-spacing:0.55px">[</span><span class="r" style="letter-spacing:-0.85px">REFR</span><span class="r" style="letter-spacing:-0.45px">:</span><span class="r" style="letter-spacing:-0.79px">00043244</span><span class="r" style="letter-spacing:0.55px">]</span><span class="r" style="letter-spacing:-0.45px"> </span><span class="r" style="letter-spacing:-0.11px">(</span><span class="r" style="letter-spacing:-0.39px">places</span><span class="r" style="letter-spacing:-0.45px"> </span><span class="r" style="letter-spacing:0.01px">HitFloor</span><span class="r" style="letter-spacing:-0.45px">.</span><span class="r" style="letter-spacing:-0.45px">.</span><span class="r" style="letter-spacing:-0.45px">.</span></div>
<div class="hd" style="left:583px;top:685px;width:13px"></div>
<div class="t" style="left:600.30px;top:676.00px;line-height:20px;font-size:12.0px;color:#108810;"><span class="r" style="letter-spacing:0.05px">Combined</span><span class="r" style="letter-spacing:-0.20px"> </span><span class="r" style="letter-spacing:0.05px">Mesh</span></div>
<div class="t" style="left:727.40px;top:676.00px;line-height:20px;font-size:12.0px;color:#808078;"><span class="r" style="letter-spacing:-0.08px">Precombined</span><span class="r" style="letter-spacing:1.65px">\</span><span class="r" style="letter-spacing:-0.69px">0004280D</span><span class="r" style="letter-spacing:-0.85px">_</span><span class="r" style="letter-spacing:-0.74px">00099B</span><span class="r" style="letter-spacing:-0.35px">.</span><span class="r" style="letter-spacing:-0.35px">.</span><span class="r" style="letter-spacing:-0.35px">.</span></div>
<div class="t" style="left:927.40px;top:676.00px;line-height:20px;font-size:12.0px;color:#808078;"><span class="r" style="letter-spacing:-0.08px">Precombined</span><span class="r" style="letter-spacing:1.65px">\</span><span class="r" style="letter-spacing:-0.69px">0004280D</span><span class="r" style="letter-spacing:-0.85px">_</span><span class="r" style="letter-spacing:-0.74px">00099B</span><span class="r" style="letter-spacing:-0.35px">.</span><span class="r" style="letter-spacing:-0.35px">.</span><span class="r" style="letter-spacing:-0.35px">.</span></div>
<div class="t" style="left:1127.40px;top:676.00px;line-height:20px;font-size:12.0px;color:#808078;"><span class="r" style="letter-spacing:-0.08px">Precombined</span><span class="r" style="letter-spacing:1.65px">\</span><span class="r" style="letter-spacing:-0.69px">0004280D</span><span class="r" style="letter-spacing:-0.85px">_</span><span class="r" style="letter-spacing:-0.74px">00099B</span><span class="r" style="letter-spacing:-0.35px">.</span><span class="r" style="letter-spacing:-0.35px">.</span><span class="r" style="letter-spacing:-0.35px">.</span></div>
<div style="left:508px;top:113px;width:1025px;height:23px;background:#fff;"></div>
<div style="left:708px;top:113px;width:1px;height:23px;background:#e5e5e5;"></div>
<div style="left:714px;top:113px;width:1px;height:23px;background:#e5e5e5;"></div>
<div style="left:914px;top:113px;width:1px;height:23px;background:#e5e5e5;"></div>
<div style="left:1114px;top:113px;width:1px;height:23px;background:#e5e5e5;"></div>
<div style="left:1314px;top:113px;width:1px;height:23px;background:#e5e5e5;"></div>
<div style="left:1514px;top:113px;width:1px;height:23px;background:#e5e5e5;"></div>
<div class="t" style="left:721.30px;top:115.00px;line-height:20px;font-size:12.0px;color:#c0102e;"><span class="r" style="letter-spacing:0.59px">[</span><span class="r" style="letter-spacing:-0.85px">B6</span><span class="r" style="letter-spacing:0.59px">]</span><span class="r" style="letter-spacing:-0.41px"> </span><span class="r" style="letter-spacing:-0.41px">Z</span><span class="r" style="letter-spacing:-0.85px">_</span><span class="r" style="letter-spacing:0.01px">Horizon</span><span class="r" style="letter-spacing:-0.41px">.</span><span class="r" style="letter-spacing:-0.53px">esp</span></div>
<div class="t" style="left:921.50px;top:115.00px;line-height:20px;font-size:12.0px;color:#c0102e;"><span class="r" style="letter-spacing:0.50px">[</span><span class="r" style="letter-spacing:-0.85px">B7</span><span class="r" style="letter-spacing:0.50px">]</span><span class="r" style="letter-spacing:-0.50px"> </span><span class="r" style="letter-spacing:-0.49px">Z</span><span class="r" style="letter-spacing:-0.85px">_</span><span class="r" style="letter-spacing:-0.07px">Horizon</span><span class="r" style="letter-spacing:-0.85px">_</span><span class="r" style="letter-spacing:-0.85px">DLC</span><span class="r" style="letter-spacing:-0.85px">_</span><span class="r" style="letter-spacing:0.06px">All</span><span class="r" style="letter-spacing:-0.50px">.</span><span class="r" style="letter-spacing:-0.61px">esp</span></div>
<div class="t" style="left:1121.50px;top:115.00px;line-height:20px;font-size:12.0px;color:#c0102e;"><span class="r" style="letter-spacing:0.59px">[</span><span class="r" style="letter-spacing:-0.85px">DF</span><span class="r" style="letter-spacing:0.59px">]</span><span class="r" style="letter-spacing:-0.41px"> </span><span class="r" style="letter-spacing:-0.41px">Z</span><span class="r" style="letter-spacing:-0.85px">_</span><span class="r" style="letter-spacing:-0.58px">Extras</span><span class="r" style="letter-spacing:-0.41px">.</span><span class="r" style="letter-spacing:-0.53px">esp</span></div>
<div class="t" style="left:1321.20px;top:115.00px;line-height:20px;font-size:12.0px;color:#e59a7c;"><span class="r" style="letter-spacing:0.65px">[</span><span class="r" style="letter-spacing:-0.85px">E1</span><span class="r" style="letter-spacing:0.65px">]</span><span class="r" style="letter-spacing:-0.35px"> </span><span class="r" style="letter-spacing:0.02px">problemsofsurvivor</span><span class="r" style="letter-spacing:-0.35px">.</span><span class="r" style="letter-spacing:-0.46px">esp</span></div>
<div style="left:1515px;top:136px;width:1px;height:582px;background:#fff;"></div>
<div style="left:1516px;top:136px;width:16px;height:565px;background:#f0f0f0;"></div>
<div style="left:1516px;top:167px;width:15px;height:17px;background:#cdcdcd;"></div>
<svg style="left:1518px;top:141px" width="11" height="8" viewBox="0 0 11 8" fill="none" stroke="#404040" stroke-width="2"><path d="M1.5 6.5 L5.5 2.5 L9.5 6.5"/></svg>
<svg style="left:1518px;top:689px" width="11" height="8" viewBox="0 0 11 8" fill="none" stroke="#404040" stroke-width="2"><path d="M1.5 1.5 L5.5 5.5 L9.5 1.5"/></svg>
<div style="left:508px;top:701px;width:1007px;height:17px;background:#f0f0f0;"></div>
<div style="left:1516px;top:701px;width:16px;height:17px;background:#f0f0f0;"></div>
<div style="left:885px;top:702px;width:613px;height:15px;background:#c8c8c8;"></div>
<svg style="left:512px;top:704.5px" width="8" height="11" viewBox="0 0 8 11" fill="none" stroke="#404040" stroke-width="2"><path d="M6.5 1.5 L2.5 5.5 L6.5 9.5"/></svg>
<svg style="left:1503px;top:704.5px" width="8" height="11" viewBox="0 0 8 11" fill="none" stroke="#404040" stroke-width="2"><path d="M1.5 1.5 L5.5 5.5 L1.5 9.5"/></svg>
<div style="left:504px;top:722px;width:50px;height:24px;background:#fff;"></div>
<div class="t" style="left:511.30px;top:725.50px;line-height:20px;font-size:12.0px;"><span class="r" style="letter-spacing:0.05px">View</span></div>
<div class="t" style="left:559.50px;top:723.50px;line-height:20px;font-size:12.0px;"><span class="r" style="letter-spacing:-0.30px">Referenced</span><span class="r" style="letter-spacing:-0.33px"> </span><span class="r" style="letter-spacing:-0.50px">By</span><span class="r" style="letter-spacing:-0.33px"> </span><span class="r" style="letter-spacing:0.00px">(</span><span class="r" style="letter-spacing:-0.67px">10</span><span class="r" style="letter-spacing:0.00px">)</span></div>
<div class="t" style="left:669.50px;top:723.50px;line-height:20px;font-size:12.0px;"><span class="r" style="letter-spacing:-0.46px">Messages</span></div>
<div class="t" style="left:732.00px;top:723.50px;line-height:20px;font-size:12.0px;"><span class="r" style="letter-spacing:0.27px">Information</span></div>
<div class="t" style="left:807.00px;top:723.50px;line-height:20px;font-size:12.0px;"><span class="r" style="letter-spacing:-0.02px">What</span><span class="r" style="letter-spacing:0.69px">'</span><span class="r" style="letter-spacing:-0.85px">s</span><span class="r" style="letter-spacing:-0.35px"> </span><span class="r" style="letter-spacing:-0.02px">New</span></div>
<div style="left:554px;top:723px;width:1px;height:22px;background:#dcdcdc;"></div>
<div style="left:662px;top:723px;width:1px;height:22px;background:#dcdcdc;"></div>
<div style="left:725px;top:723px;width:1px;height:22px;background:#dcdcdc;"></div>
<div style="left:801px;top:723px;width:1px;height:22px;background:#dcdcdc;"></div>
<div style="left:873px;top:723px;width:1px;height:22px;background:#dcdcdc;"></div>
<div style="left:4px;top:751px;width:1535px;height:1px;background:#d4d4d4;"></div>
<div class="t" style="left:6.30px;top:753.80px;line-height:20px;font-size:12.0px;"><span class="r" style="letter-spacing:0.67px">[</span><span class="r" style="letter-spacing:-0.67px">00</span><span class="r" style="letter-spacing:-0.33px">:</span><span class="r" style="letter-spacing:-0.67px">24</span><span class="r" style="letter-spacing:0.67px">]</span><span class="r" style="letter-spacing:-0.33px"> </span><span class="r" style="letter-spacing:-0.00px">Background</span><span class="r" style="letter-spacing:-0.33px"> </span><span class="r" style="letter-spacing:-0.23px">Loader</span><span class="r" style="letter-spacing:-0.33px">:</span><span class="r" style="letter-spacing:-0.33px"> </span><span class="r" style="letter-spacing:0.08px">finished</span></div>
</body></html>
